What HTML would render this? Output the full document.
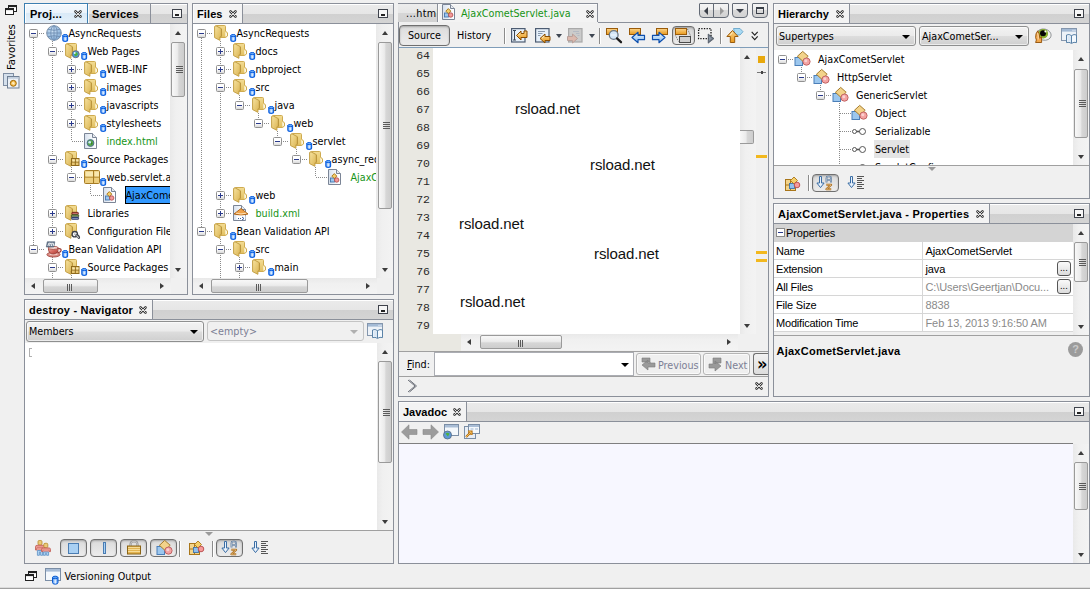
<!DOCTYPE html><html><head><meta charset="utf-8"><title>NetBeans IDE</title><style>

html,body{margin:0;padding:0}
body{width:1090px;height:589px;overflow:hidden;background:#f0f0f0;position:relative;font-family:'DejaVu Sans Condensed','DejaVu Sans','Liberation Sans',sans-serif;font-stretch:condensed;font-size:11px;color:#000}
div{position:absolute;white-space:nowrap}
svg{display:block;position:absolute;left:0;top:0;overflow:visible}
.tt{font-family:'Liberation Sans',sans-serif;font-weight:bold;font-size:11px;color:#000}
.tl{font-size:10.7px}
.tl.sel{background:#3399ff;color:#000;padding:0 1px;box-sizing:border-box;outline:1px solid #000;outline-offset:-1px}
.vd{width:1px;background-image:linear-gradient(#8a8a8a 50%,transparent 50%);background-size:1px 2px}
.hd{height:1px;background-image:linear-gradient(90deg,#8a8a8a 50%,transparent 50%);background-size:2px 1px}
.arr{width:0;height:0}
.ps{font-family:'Liberation Sans',sans-serif;font-size:11px;letter-spacing:-.1px}

</style></head><body>
<svg width="0" height="0" style="position:absolute">
<defs>
<linearGradient id="gFold" x1="0" y1="0" x2="1" y2="1"><stop offset="0" stop-color="#f7e3a0"/><stop offset="1" stop-color="#d9b24f"/></linearGradient>
<linearGradient id="gFoldB" x1="0" y1="0" x2="0" y2="1"><stop offset="0" stop-color="#f3dc93"/><stop offset="1" stop-color="#e2c061"/></linearGradient>
<linearGradient id="gCyl" x1="0" y1="0" x2="1" y2="0"><stop offset="0" stop-color="#3f8af0"/><stop offset=".3" stop-color="#9cc7fb"/><stop offset=".5" stop-color="#f4f9ff"/><stop offset=".7" stop-color="#9cc7fb"/><stop offset="1" stop-color="#3f8af0"/></linearGradient>
<radialGradient id="gGlobe" cx=".4" cy=".35" r=".7"><stop offset="0" stop-color="#cfe3f5"/><stop offset="1" stop-color="#7fa9d4"/></radialGradient>
<linearGradient id="gBtn" x1="0" y1="0" x2="0" y2="1"><stop offset="0" stop-color="#f4f4f4"/><stop offset=".5" stop-color="#e6e6e6"/><stop offset=".5" stop-color="#d9d9d9"/><stop offset="1" stop-color="#cfcfcf"/></linearGradient>
<linearGradient id="gOr" x1="0" y1="0" x2="0" y2="1"><stop offset="0" stop-color="#fbd48a"/><stop offset="1" stop-color="#e8991c"/></linearGradient>
<linearGradient id="gBl" x1="0" y1="0" x2="0" y2="1"><stop offset="0" stop-color="#f2f9ff"/><stop offset="1" stop-color="#7fb8ee"/></linearGradient>
<linearGradient id="gCup" x1="0" y1="0" x2="1" y2="1"><stop offset="0" stop-color="#f0b3ab"/><stop offset=".5" stop-color="#d5675d"/><stop offset="1" stop-color="#a93b32"/></linearGradient><linearGradient id="gPage" x1="0" y1="0" x2="1" y2="0"><stop offset="0" stop-color="#d6e0ed"/><stop offset=".6" stop-color="#f4f7fb"/><stop offset="1" stop-color="#ffffff"/></linearGradient>
</defs></svg>
<div style="left:5px;top:5px;width:12px;height:10px;"><svg width="12" height="10" viewBox="0 0 12 10" ><rect x="3.5" y=".5" width="8" height="6" fill="#fff" stroke="#222"/><rect x="3.5" y=".5" width="8" height="1.6" fill="#222"/><rect x=".5" y="3.5" width="8" height="6" fill="#fff" stroke="#222"/><rect x=".5" y="3.5" width="8" height="1.6" fill="#222"/></svg></div>
<div style="left:5px;top:70px;width:60px;height:14px;transform-origin:0 0;transform:rotate(-90deg);font-size:11.3px;line-height:14px">Favorites</div>
<div style="left:3px;top:73px;width:17px;height:16px;"><svg width="17" height="16" viewBox="0 0 17 16" ><rect x=".5" y=".5" width="10" height="12" fill="#d5e0ec" stroke="#7f8ea3"/><rect x="4.5" y="3.5" width="11.5" height="11.5" fill="#eef2f7" stroke="#6f7f94"/><rect x="5" y="4" width="10.5" height="1.8" fill="#c3cfde"/><circle cx="10.3" cy="10.3" r="3" fill="#f0ae2c" stroke="#9a6408" stroke-width=".9"/><path d="M8.3 10.3 h4 M10.3 8.3 v4 M8.9 8.9 l2.8 2.8 M11.7 8.9 l-2.8 2.8" stroke="#fff3d6" stroke-width=".7"/></svg></div>
<div style="left:24px;top:3px;width:164px;height:292px;box-sizing:border-box;border:1px solid #8b909a;background:#f0f0f0"><div style="left:0px;top:0px;width:162px;height:20px;"><div style="left:0;top:0;width:162px;height:19px;background:linear-gradient(#fff 0,#fff 1px,#eaeaea 1px,#e6e6e6 50%,#d0d0d0 53%,#d4d4d4)"></div><div style="left:0;top:19px;width:162px;height:1px;background:#8b909a"></div><div style="left:0px;top:0;width:62px;height:19px;background:#f3f3f3;box-shadow:inset 1px 1px 0 #fbfbfb"></div><div style="left:62px;top:0;width:1px;height:19px;background:#8b909a"></div><div class="tt" style="left:4px;top:0;height:20px;line-height:21px;letter-spacing:0.2px">Proj...</div><div style="left:49px;top:6px;width:8px;height:8px"><svg width="8" height="8" viewBox="0 0 8 8" ><path d="M1.5 1.5 L6.5 6.5 M6.5 1.5 L1.5 6.5" stroke="#3c3c3c" stroke-width="2.6" stroke-linecap="round"/><path d="M1.5 1.5 L6.5 6.5 M6.5 1.5 L1.5 6.5" stroke="#f4f4f4" stroke-width=".9" stroke-linecap="round"/></svg></div><div style="left:63px;top:0;width:62px;height:19px;background:linear-gradient(#fff 0,#fff 1px,#eaeaea 1px,#e6e6e6 50%,#d0d0d0 53%,#d4d4d4);box-shadow:inset 1px 1px 0 #fbfbfb"></div><div style="left:125px;top:0;width:1px;height:19px;background:#8b909a"></div><div class="tt" style="left:67px;top:0;height:20px;line-height:21px;letter-spacing:0.2px">Services</div><div style="left:147px;top:5px;width:10px;height:9px;box-sizing:border-box;border:1px solid #3f434c;background:#f6f6f6"><div style="left:2px;top:4px;width:4px;height:2px;background:#222"></div></div></div><div style="left:-1px;top:-1px;width:64px;height:21px;box-sizing:border-box;border:1px solid #3c7fb1;border-bottom-color:#8b909a;background:linear-gradient(#f4f9fd,#eaf3fb 50%,#d9eaf7 50%,#e4f0fa);box-shadow:inset 1px 1px 0 #fff"><div class="tt" style="left:5px;top:0;height:20px;line-height:21px;letter-spacing:.2px">Proj...</div><div style="left:49px;top:6px;width:8px;height:8px"><svg width="8" height="8" viewBox="0 0 8 8" ><path d="M1.5 1.5 L6.5 6.5 M6.5 1.5 L1.5 6.5" stroke="#3c3c3c" stroke-width="2.6" stroke-linecap="round"/><path d="M1.5 1.5 L6.5 6.5 M6.5 1.5 L1.5 6.5" stroke="#f4f4f4" stroke-width=".9" stroke-linecap="round"/></svg></div></div><div style="left:0px;top:20px;width:145px;height:254px;overflow:hidden;background:#fff"><div class="vd" style="left:27px;top:17px;height:190px"></div><div class="vd" style="left:46px;top:35px;height:82px"></div><div class="vd" style="left:46px;top:143px;height:10px"></div><div class="vd" style="left:65px;top:161px;height:10px"></div><div class="vd" style="left:27px;top:233px;height:29px"></div><div class="vd" style="left:46px;top:251px;height:12px"></div><div class="vd" style="left:8px;top:14px;height:207px"></div><div class="hd" style="left:14px;top:9px;width:6px"></div><div style="left:4px;top:5px;width:9px;height:9px;box-sizing:border-box;border:1px solid #919191;border-radius:1.5px;background:linear-gradient(#fff 45%,#d9d9d9)"><div style="left:2px;top:3px;width:3px;height:1px;background:#2a3a8c;width:5px;left:1px"></div></div><div style="left:21px;top:1px;width:16px;height:16px"><svg width="16" height="16" viewBox="0 0 16 16" ><circle cx="8" cy="8" r="7.3" fill="url(#gGlobe)" stroke="#7f93aa" stroke-width="1"/><ellipse cx="8" cy="8" rx="3.2" ry="7.3" fill="none" stroke="#6f8fb3" stroke-width=".9"/><path d="M.8 8 H15.2 M8 .8 V15.2 M2 4.3 Q8 6.3 14 4.3 M2 11.7 Q8 9.7 14 11.7" fill="none" stroke="#6f8fb3" stroke-width=".9"/></svg></div><div style="left:37px;top:9px;width:8px;height:9px"><svg width="8" height="9" viewBox="0 0 8 9" ><path d="M.8 2.7 V7.1 Q.8 8.4 3.2 8.4 Q5.6 8.4 5.6 7.1 V2.7Z" fill="url(#gCyl)" stroke="#0b5fe0" stroke-width="1.1"/><ellipse cx="3.2" cy="2.6" rx="2.4" ry="1.1" fill="#6fadf7" stroke="#0b5fe0" stroke-width="1"/></svg></div><div class="tl" style="left:43.5px;top:0px;height:18px;line-height:19px;color:#000">AsyncRequests</div><div class="hd" style="left:33px;top:27px;width:6px"></div><div style="left:23px;top:23px;width:9px;height:9px;box-sizing:border-box;border:1px solid #919191;border-radius:1.5px;background:linear-gradient(#fff 45%,#d9d9d9)"><div style="left:2px;top:3px;width:3px;height:1px;background:#2a3a8c;width:5px;left:1px"></div></div><div style="left:40px;top:19px;width:16px;height:16px"><svg width="16" height="16" viewBox="0 0 16 16" ><path d="M1.5 1.5 Q1.5 .5 2.5 .5 L10.5 .5 Q11.5 .5 11.5 1.5 L11.5 12.5 L1.5 12.5 Z" fill="url(#gFoldB)" stroke="#cfab50" stroke-width="1"/><path d="M.6 1.4 L2 .8 L7.4 3.7 V11.4 L5.9 11.9 V15.3 L.6 12.6 Z" fill="url(#gFold)" stroke="#c4a046" stroke-width="1" stroke-linejoin="round"/><path d="M7.4 4 V11.3" stroke="#b8923a" stroke-width=".9"/><circle cx="10.7" cy="11.2" r="3.5" fill="#4a9be0" stroke="#6b7079" stroke-width="1"/><path d="M8.8 10.2 Q10.2 8.6 12.3 9.6 L12.9 11.6 L10.8 13.6 L9.6 12.2 Z" fill="#4fb23a"/><circle cx="9.7" cy="9.9" r="1" fill="#e3f2ff"/></svg></div><div style="left:56px;top:27px;width:8px;height:9px"><svg width="8" height="9" viewBox="0 0 8 9" ><path d="M.8 2.7 V7.1 Q.8 8.4 3.2 8.4 Q5.6 8.4 5.6 7.1 V2.7Z" fill="url(#gCyl)" stroke="#0b5fe0" stroke-width="1.1"/><ellipse cx="3.2" cy="2.6" rx="2.4" ry="1.1" fill="#6fadf7" stroke="#0b5fe0" stroke-width="1"/></svg></div><div class="tl" style="left:62.5px;top:18px;height:18px;line-height:19px;color:#000">Web Pages</div><div class="hd" style="left:52px;top:45px;width:6px"></div><div style="left:42px;top:41px;width:9px;height:9px;box-sizing:border-box;border:1px solid #919191;border-radius:1.5px;background:linear-gradient(#fff 45%,#d9d9d9)"><div style="left:2px;top:3px;width:3px;height:1px;background:#2a3a8c;width:5px;left:1px"></div><div style="left:3px;top:1px;width:1px;height:5px;background:#2a3a8c"></div></div><div style="left:59px;top:37px;width:16px;height:16px"><svg width="16" height="16" viewBox="0 0 16 16" ><path d="M1.5 1.5 Q1.5 .5 2.5 .5 L10.5 .5 Q11.5 .5 11.5 1.5 L11.5 6 L13.5 8 L13.5 11 L11.5 12.5 L6 12.5 L1.5 12.5 Z" fill="url(#gFoldB)" stroke="#cfab50" stroke-width="1"/><path d="M11.4 6.8 L12.9 8.3 L12.9 10.8 L11.4 11.8 Z" fill="#fffdf0"/><path d="M.6 1.4 L2 .8 L7.4 3.7 V11.4 L5.9 11.9 V15.3 L.6 12.6 Z" fill="url(#gFold)" stroke="#c4a046" stroke-width="1" stroke-linejoin="round"/><path d="M7.4 4 V11.3" stroke="#b8923a" stroke-width=".9"/></svg></div><div style="left:75px;top:45px;width:8px;height:9px"><svg width="8" height="9" viewBox="0 0 8 9" ><path d="M.8 2.7 V7.1 Q.8 8.4 3.2 8.4 Q5.6 8.4 5.6 7.1 V2.7Z" fill="url(#gCyl)" stroke="#0b5fe0" stroke-width="1.1"/><ellipse cx="3.2" cy="2.6" rx="2.4" ry="1.1" fill="#6fadf7" stroke="#0b5fe0" stroke-width="1"/></svg></div><div class="tl" style="left:81.5px;top:36px;height:18px;line-height:19px;color:#000">WEB-INF</div><div class="hd" style="left:52px;top:63px;width:6px"></div><div style="left:42px;top:59px;width:9px;height:9px;box-sizing:border-box;border:1px solid #919191;border-radius:1.5px;background:linear-gradient(#fff 45%,#d9d9d9)"><div style="left:2px;top:3px;width:3px;height:1px;background:#2a3a8c;width:5px;left:1px"></div><div style="left:3px;top:1px;width:1px;height:5px;background:#2a3a8c"></div></div><div style="left:59px;top:55px;width:16px;height:16px"><svg width="16" height="16" viewBox="0 0 16 16" ><path d="M1.5 1.5 Q1.5 .5 2.5 .5 L10.5 .5 Q11.5 .5 11.5 1.5 L11.5 6 L13.5 8 L13.5 11 L11.5 12.5 L6 12.5 L1.5 12.5 Z" fill="url(#gFoldB)" stroke="#cfab50" stroke-width="1"/><path d="M11.4 6.8 L12.9 8.3 L12.9 10.8 L11.4 11.8 Z" fill="#fffdf0"/><path d="M.6 1.4 L2 .8 L7.4 3.7 V11.4 L5.9 11.9 V15.3 L.6 12.6 Z" fill="url(#gFold)" stroke="#c4a046" stroke-width="1" stroke-linejoin="round"/><path d="M7.4 4 V11.3" stroke="#b8923a" stroke-width=".9"/></svg></div><div style="left:75px;top:63px;width:8px;height:9px"><svg width="8" height="9" viewBox="0 0 8 9" ><path d="M.8 2.7 V7.1 Q.8 8.4 3.2 8.4 Q5.6 8.4 5.6 7.1 V2.7Z" fill="url(#gCyl)" stroke="#0b5fe0" stroke-width="1.1"/><ellipse cx="3.2" cy="2.6" rx="2.4" ry="1.1" fill="#6fadf7" stroke="#0b5fe0" stroke-width="1"/></svg></div><div class="tl" style="left:81.5px;top:54px;height:18px;line-height:19px;color:#000">images</div><div class="hd" style="left:52px;top:81px;width:6px"></div><div style="left:42px;top:77px;width:9px;height:9px;box-sizing:border-box;border:1px solid #919191;border-radius:1.5px;background:linear-gradient(#fff 45%,#d9d9d9)"><div style="left:2px;top:3px;width:3px;height:1px;background:#2a3a8c;width:5px;left:1px"></div><div style="left:3px;top:1px;width:1px;height:5px;background:#2a3a8c"></div></div><div style="left:59px;top:73px;width:16px;height:16px"><svg width="16" height="16" viewBox="0 0 16 16" ><path d="M1.5 1.5 Q1.5 .5 2.5 .5 L10.5 .5 Q11.5 .5 11.5 1.5 L11.5 6 L13.5 8 L13.5 11 L11.5 12.5 L6 12.5 L1.5 12.5 Z" fill="url(#gFoldB)" stroke="#cfab50" stroke-width="1"/><path d="M11.4 6.8 L12.9 8.3 L12.9 10.8 L11.4 11.8 Z" fill="#fffdf0"/><path d="M.6 1.4 L2 .8 L7.4 3.7 V11.4 L5.9 11.9 V15.3 L.6 12.6 Z" fill="url(#gFold)" stroke="#c4a046" stroke-width="1" stroke-linejoin="round"/><path d="M7.4 4 V11.3" stroke="#b8923a" stroke-width=".9"/></svg></div><div style="left:75px;top:81px;width:8px;height:9px"><svg width="8" height="9" viewBox="0 0 8 9" ><path d="M.8 2.7 V7.1 Q.8 8.4 3.2 8.4 Q5.6 8.4 5.6 7.1 V2.7Z" fill="url(#gCyl)" stroke="#0b5fe0" stroke-width="1.1"/><ellipse cx="3.2" cy="2.6" rx="2.4" ry="1.1" fill="#6fadf7" stroke="#0b5fe0" stroke-width="1"/></svg></div><div class="tl" style="left:81.5px;top:72px;height:18px;line-height:19px;color:#000">javascripts</div><div class="hd" style="left:52px;top:99px;width:6px"></div><div style="left:42px;top:95px;width:9px;height:9px;box-sizing:border-box;border:1px solid #919191;border-radius:1.5px;background:linear-gradient(#fff 45%,#d9d9d9)"><div style="left:2px;top:3px;width:3px;height:1px;background:#2a3a8c;width:5px;left:1px"></div><div style="left:3px;top:1px;width:1px;height:5px;background:#2a3a8c"></div></div><div style="left:59px;top:91px;width:16px;height:16px"><svg width="16" height="16" viewBox="0 0 16 16" ><path d="M1.5 1.5 Q1.5 .5 2.5 .5 L10.5 .5 Q11.5 .5 11.5 1.5 L11.5 6 L13.5 8 L13.5 11 L11.5 12.5 L6 12.5 L1.5 12.5 Z" fill="url(#gFoldB)" stroke="#cfab50" stroke-width="1"/><path d="M11.4 6.8 L12.9 8.3 L12.9 10.8 L11.4 11.8 Z" fill="#fffdf0"/><path d="M.6 1.4 L2 .8 L7.4 3.7 V11.4 L5.9 11.9 V15.3 L.6 12.6 Z" fill="url(#gFold)" stroke="#c4a046" stroke-width="1" stroke-linejoin="round"/><path d="M7.4 4 V11.3" stroke="#b8923a" stroke-width=".9"/></svg></div><div style="left:75px;top:99px;width:8px;height:9px"><svg width="8" height="9" viewBox="0 0 8 9" ><path d="M.8 2.7 V7.1 Q.8 8.4 3.2 8.4 Q5.6 8.4 5.6 7.1 V2.7Z" fill="url(#gCyl)" stroke="#0b5fe0" stroke-width="1.1"/><ellipse cx="3.2" cy="2.6" rx="2.4" ry="1.1" fill="#6fadf7" stroke="#0b5fe0" stroke-width="1"/></svg></div><div class="tl" style="left:81.5px;top:90px;height:18px;line-height:19px;color:#000">stylesheets</div><div class="hd" style="left:47px;top:117px;width:11px"></div><div style="left:59px;top:109px;width:16px;height:16px"><svg width="16" height="16" viewBox="0 0 16 16" ><path d="M.5 .5 H8.5 L12.5 4.5 V15.5 H.5Z" fill="url(#gPage)" stroke="#7b8596"/><path d="M8.5 .5 V4.5 H12.5" fill="#e6eaf0" stroke="#7b8596"/><circle cx="6.5" cy="10" r="3.4" fill="#5aa84a" stroke="#4d6f8f" stroke-width="1"/><circle cx="5.7" cy="9.2" r="1.3" fill="#cfe8ff"/><path d="M7.3 9 l1.2 1.4 l-1.5 1.6" fill="#2f7d2a"/></svg></div><div class="tl" style="left:81.5px;top:108px;height:18px;line-height:19px;color:#169416">index.html</div><div class="hd" style="left:33px;top:135px;width:6px"></div><div style="left:23px;top:131px;width:9px;height:9px;box-sizing:border-box;border:1px solid #919191;border-radius:1.5px;background:linear-gradient(#fff 45%,#d9d9d9)"><div style="left:2px;top:3px;width:3px;height:1px;background:#2a3a8c;width:5px;left:1px"></div></div><div style="left:40px;top:127px;width:16px;height:16px"><svg width="16" height="16" viewBox="0 0 16 16" ><path d="M1.5 1.5 Q1.5 .5 2.5 .5 L10.5 .5 Q11.5 .5 11.5 1.5 L11.5 12.5 L1.5 12.5 Z" fill="url(#gFoldB)" stroke="#cfab50" stroke-width="1"/><path d="M.6 1.4 L2 .8 L7.4 3.7 V11.4 L5.9 11.9 V15.3 L.6 12.6 Z" fill="url(#gFold)" stroke="#c4a046" stroke-width="1" stroke-linejoin="round"/><path d="M7.4 4 V11.3" stroke="#b8923a" stroke-width=".9"/><rect x="6.5" y="7.5" width="7.5" height="7" fill="#e7c673" stroke="#8f6a1c"/><path d="M6.5 11 H14 M10.3 7.5 V14.5" stroke="#8f6a1c" stroke-width="1"/><path d="M7.5 8.5 h2.3 v2 h-2.3z M11.3 8.5 h2.2 v2 h-2.2z" fill="#f8e6ad"/></svg></div><div style="left:56px;top:135px;width:8px;height:9px"><svg width="8" height="9" viewBox="0 0 8 9" ><path d="M.8 2.7 V7.1 Q.8 8.4 3.2 8.4 Q5.6 8.4 5.6 7.1 V2.7Z" fill="url(#gCyl)" stroke="#0b5fe0" stroke-width="1.1"/><ellipse cx="3.2" cy="2.6" rx="2.4" ry="1.1" fill="#6fadf7" stroke="#0b5fe0" stroke-width="1"/></svg></div><div class="tl" style="left:62.5px;top:126px;height:18px;line-height:19px;color:#000">Source Packages</div><div class="hd" style="left:52px;top:153px;width:6px"></div><div style="left:42px;top:149px;width:9px;height:9px;box-sizing:border-box;border:1px solid #919191;border-radius:1.5px;background:linear-gradient(#fff 45%,#d9d9d9)"><div style="left:2px;top:3px;width:3px;height:1px;background:#2a3a8c;width:5px;left:1px"></div></div><div style="left:59px;top:145px;width:16px;height:16px"><svg width="16" height="16" viewBox="0 0 16 16" ><rect x=".5" y="1.5" width="15" height="13" rx="1" fill="#e8c56c" stroke="#a67c25"/><path d="M.5 8 H15.5 M9.5 1.5 V14.5" stroke="#a67c25"/><path d="M1.5 2.5 h7.5 v5 h-7.5z M10.5 2.5 h4.5 v5 h-4.5z" fill="#f8e7ae"/><path d="M1.5 9 h7.5 v5 h-7.5z M10.5 9 h4.5 v5 h-4.5z" fill="#edcf7f"/></svg></div><div style="left:75px;top:153px;width:8px;height:9px"><svg width="8" height="9" viewBox="0 0 8 9" ><path d="M.8 2.7 V7.1 Q.8 8.4 3.2 8.4 Q5.6 8.4 5.6 7.1 V2.7Z" fill="url(#gCyl)" stroke="#0b5fe0" stroke-width="1.1"/><ellipse cx="3.2" cy="2.6" rx="2.4" ry="1.1" fill="#6fadf7" stroke="#0b5fe0" stroke-width="1"/></svg></div><div class="tl" style="left:81.5px;top:144px;height:18px;line-height:19px;color:#000">web.servlet.async_request</div><div class="hd" style="left:66px;top:171px;width:11px"></div><div style="left:78px;top:163px;width:16px;height:16px"><svg width="16" height="16" viewBox="0 0 16 16" ><path d="M.5 .5 H8.5 L12.5 4.5 V15.5 H.5Z" fill="url(#gPage)" stroke="#7b8596"/><path d="M8.5 .5 V4.5 H12.5" fill="#e6eaf0" stroke="#7b8596"/><rect x="2.5" y="9" width="4" height="4" fill="#9cc7ee" stroke="#4677ad" stroke-width=".9"/><path d="M6.3 4.6 L8.8 7.1 L6.3 9.6 L3.8 7.1Z" fill="#f5cf6a" stroke="#a36f14" stroke-width=".9"/><circle cx="8.7" cy="11" r="2.2" fill="#f29a9a" stroke="#b85050" stroke-width=".9"/></svg></div><div class="tl sel" style="left:99.5px;top:162px;height:18px;line-height:19px">AjaxCometServlet.java</div><div class="hd" style="left:33px;top:189px;width:6px"></div><div style="left:23px;top:185px;width:9px;height:9px;box-sizing:border-box;border:1px solid #919191;border-radius:1.5px;background:linear-gradient(#fff 45%,#d9d9d9)"><div style="left:2px;top:3px;width:3px;height:1px;background:#2a3a8c;width:5px;left:1px"></div><div style="left:3px;top:1px;width:1px;height:5px;background:#2a3a8c"></div></div><div style="left:40px;top:181px;width:16px;height:16px"><svg width="16" height="16" viewBox="0 0 16 16" ><path d="M1.5 1.5 Q1.5 .5 2.5 .5 L10.5 .5 Q11.5 .5 11.5 1.5 L11.5 12.5 L1.5 12.5 Z" fill="url(#gFoldB)" stroke="#cfab50" stroke-width="1"/><path d="M.6 1.4 L2 .8 L7.4 3.7 V11.4 L5.9 11.9 V15.3 L.6 12.6 Z" fill="url(#gFold)" stroke="#c4a046" stroke-width="1" stroke-linejoin="round"/><path d="M7.4 4 V11.3" stroke="#b8923a" stroke-width=".9"/><rect x="6.8" y="7.3" width="6.6" height="2.3" rx=".8" fill="#a8342c" stroke="#5e1a14" stroke-width=".7"/><path d="M7.5 8.9 h5.2" stroke="#f0d9d6" stroke-width=".6"/><rect x="6.3" y="9.7" width="7.4" height="2.3" rx=".8" fill="#5e7f3a" stroke="#2f451c" stroke-width=".7"/><path d="M7 11.3 h6" stroke="#e1ead6" stroke-width=".6"/><rect x="6.6" y="12.1" width="7" height="2.4" rx=".8" fill="#3b4f8a" stroke="#1c2750" stroke-width=".7"/><path d="M7.3 13.8 h5.6" stroke="#d9def0" stroke-width=".6"/></svg></div><div class="tl" style="left:62.5px;top:180px;height:18px;line-height:19px;color:#000">Libraries</div><div class="hd" style="left:33px;top:207px;width:6px"></div><div style="left:23px;top:203px;width:9px;height:9px;box-sizing:border-box;border:1px solid #919191;border-radius:1.5px;background:linear-gradient(#fff 45%,#d9d9d9)"><div style="left:2px;top:3px;width:3px;height:1px;background:#2a3a8c;width:5px;left:1px"></div><div style="left:3px;top:1px;width:1px;height:5px;background:#2a3a8c"></div></div><div style="left:40px;top:199px;width:16px;height:16px"><svg width="16" height="16" viewBox="0 0 16 16" ><path d="M1.5 1.5 Q1.5 .5 2.5 .5 L10.5 .5 Q11.5 .5 11.5 1.5 L11.5 12.5 L1.5 12.5 Z" fill="url(#gFoldB)" stroke="#cfab50" stroke-width="1"/><path d="M.6 1.4 L2 .8 L7.4 3.7 V11.4 L5.9 11.9 V15.3 L.6 12.6 Z" fill="url(#gFold)" stroke="#c4a046" stroke-width="1" stroke-linejoin="round"/><path d="M7.4 4 V11.3" stroke="#b8923a" stroke-width=".9"/><circle cx="9.8" cy="11.2" r="2.7" fill="#fafafa" stroke="#3c4048" stroke-width="1.3"/><circle cx="9.8" cy="11.2" r=".9" fill="#b9bec8"/><path d="M11.6 12.6 Q13.6 12.8 13.8 14.6" stroke="#3c4048" stroke-width="2.6" fill="none" stroke-linecap="round"/><path d="M11.8 12.8 Q13.2 13 13.5 14.3" stroke="#f4f4f4" stroke-width="1" fill="none" stroke-linecap="round"/></svg></div><div class="tl" style="left:62.5px;top:198px;height:18px;line-height:19px;color:#000">Configuration Files</div><div class="hd" style="left:14px;top:225px;width:6px"></div><div style="left:4px;top:221px;width:9px;height:9px;box-sizing:border-box;border:1px solid #919191;border-radius:1.5px;background:linear-gradient(#fff 45%,#d9d9d9)"><div style="left:2px;top:3px;width:3px;height:1px;background:#2a3a8c;width:5px;left:1px"></div></div><div style="left:21px;top:217px;width:16px;height:16px"><svg width="17" height="17" viewBox="0 0 17 17" ><ellipse cx="7.5" cy="13.6" rx="6.6" ry="2.4" fill="#d98a82" stroke="#9a3a32" stroke-width=".8"/><ellipse cx="7.5" cy="13.1" rx="4.2" ry="1.2" fill="#f3cfc9"/><path d="M2.4 6.8 H12.2 Q12.4 13 7.3 13 Q2.2 13 2.4 6.8Z" fill="url(#gCup)" stroke="#9a3a32" stroke-width=".9"/><path d="M12.2 7.6 Q15.6 7.2 15 9.8 Q14.4 11.8 11.6 11.4" fill="none" stroke="#9a3a32" stroke-width="1.3"/><path d="M12.3 8.4 Q14.4 8.2 14 9.7 Q13.6 10.8 12 10.6" fill="none" stroke="#e7a29a" stroke-width=".6"/><ellipse cx="7.3" cy="6.9" rx="4.9" ry="1.5" fill="#f6ddd8" stroke="#9a3a32" stroke-width=".8"/><path d="M1.3 .8 H8.8 L7.8 6 H.3Z" fill="#6b7c93" stroke="#46556a" stroke-width=".6"/><path d="M1.9 5 L2.9 2 Q4 1.6 4 2.8 L3.6 5 M4 2.6 Q5.4 1.4 5.9 2.8 L5.4 5 M5.9 2.6 Q7.2 1.4 7.6 2.8 L7.2 5" stroke="#fff" stroke-width=".85" fill="none"/></svg></div><div style="left:37px;top:225px;width:8px;height:9px"><svg width="8" height="9" viewBox="0 0 8 9" ><path d="M.8 2.7 V7.1 Q.8 8.4 3.2 8.4 Q5.6 8.4 5.6 7.1 V2.7Z" fill="url(#gCyl)" stroke="#0b5fe0" stroke-width="1.1"/><ellipse cx="3.2" cy="2.6" rx="2.4" ry="1.1" fill="#6fadf7" stroke="#0b5fe0" stroke-width="1"/></svg></div><div class="tl" style="left:43.5px;top:216px;height:18px;line-height:19px;color:#000">Bean Validation API</div><div class="hd" style="left:33px;top:243px;width:6px"></div><div style="left:23px;top:239px;width:9px;height:9px;box-sizing:border-box;border:1px solid #919191;border-radius:1.5px;background:linear-gradient(#fff 45%,#d9d9d9)"><div style="left:2px;top:3px;width:3px;height:1px;background:#2a3a8c;width:5px;left:1px"></div></div><div style="left:40px;top:235px;width:16px;height:16px"><svg width="16" height="16" viewBox="0 0 16 16" ><path d="M1.5 1.5 Q1.5 .5 2.5 .5 L10.5 .5 Q11.5 .5 11.5 1.5 L11.5 12.5 L1.5 12.5 Z" fill="url(#gFoldB)" stroke="#cfab50" stroke-width="1"/><path d="M.6 1.4 L2 .8 L7.4 3.7 V11.4 L5.9 11.9 V15.3 L.6 12.6 Z" fill="url(#gFold)" stroke="#c4a046" stroke-width="1" stroke-linejoin="round"/><path d="M7.4 4 V11.3" stroke="#b8923a" stroke-width=".9"/><rect x="6.5" y="7.5" width="7.5" height="7" fill="#e7c673" stroke="#8f6a1c"/><path d="M6.5 11 H14 M10.3 7.5 V14.5" stroke="#8f6a1c" stroke-width="1"/><path d="M7.5 8.5 h2.3 v2 h-2.3z M11.3 8.5 h2.2 v2 h-2.2z" fill="#f8e6ad"/></svg></div><div style="left:56px;top:243px;width:8px;height:9px"><svg width="8" height="9" viewBox="0 0 8 9" ><path d="M.8 2.7 V7.1 Q.8 8.4 3.2 8.4 Q5.6 8.4 5.6 7.1 V2.7Z" fill="url(#gCyl)" stroke="#0b5fe0" stroke-width="1.1"/><ellipse cx="3.2" cy="2.6" rx="2.4" ry="1.1" fill="#6fadf7" stroke="#0b5fe0" stroke-width="1"/></svg></div><div class="tl" style="left:62.5px;top:234px;height:18px;line-height:19px;color:#000">Source Packages</div></div><div style="left:145px;top:20px;width:17px;height:254px;background:linear-gradient(90deg,#e9e9e9,#f0f0f0 35%,#f3f3f3)"><div class="arr" style="left:4.5px;top:7px;border-left:3.5px solid transparent;border-right:3.5px solid transparent;border-bottom:4px solid #3c3c3c"></div><div class="arr" style="left:4.5px;top:244px;border-left:3.5px solid transparent;border-right:3.5px solid transparent;border-top:4px solid #3c3c3c"></div><div style="left:1px;top:18px;width:14px;height:55px;box-sizing:border-box;border:1px solid #9a9a9a;border-radius:2px;background:linear-gradient(90deg,#f8f8f8,#ebebeb 45%,#d6d6d6 58%,#cdcdcd)"><div style="left:4px;top:23px;width:7px;height:1px;background:#5a5a5a"></div><div style="left:4px;top:25px;width:7px;height:1px;background:#5a5a5a"></div><div style="left:4px;top:27px;width:7px;height:1px;background:#5a5a5a"></div><div style="left:4px;top:29px;width:7px;height:1px;background:#5a5a5a"></div></div></div><div style="left:0px;top:274px;width:146px;height:16px;background:linear-gradient(#e9e9e9,#f0f0f0 35%,#f3f3f3)"><div class="arr" style="left:6px;top:4.5px;border-top:3.5px solid transparent;border-bottom:3.5px solid transparent;border-right:4px solid #3c3c3c"></div><div class="arr" style="left:135px;top:4.5px;border-top:3.5px solid transparent;border-bottom:3.5px solid transparent;border-left:4px solid #3c3c3c"></div><div style="left:18px;top:1px;width:55px;height:14px;box-sizing:border-box;border:1px solid #9a9a9a;border-radius:2px;background:linear-gradient(#f8f8f8,#ebebeb 45%,#d6d6d6 58%,#cdcdcd)"><div style="top:4px;left:23px;height:7px;width:1px;background:#5a5a5a"></div><div style="top:4px;left:25px;height:7px;width:1px;background:#5a5a5a"></div><div style="top:4px;left:27px;height:7px;width:1px;background:#5a5a5a"></div></div></div><div style="left:146px;top:274px;width:16px;height:16px;background:#f0f0f0"></div></div>
<div style="left:192px;top:3px;width:202px;height:292px;box-sizing:border-box;border:1px solid #8b909a;background:#f0f0f0"><div style="left:0px;top:0px;width:200px;height:20px;"><div style="left:0;top:0;width:200px;height:19px;background:linear-gradient(#fff 0,#fff 1px,#eaeaea 1px,#e6e6e6 50%,#d0d0d0 53%,#d4d4d4)"></div><div style="left:0;top:19px;width:200px;height:1px;background:#8b909a"></div><div style="left:0px;top:0;width:49px;height:19px;background:#f3f3f3;box-shadow:inset 1px 1px 0 #fbfbfb"></div><div style="left:49px;top:0;width:1px;height:19px;background:#8b909a"></div><div class="tt" style="left:4px;top:0;height:20px;line-height:21px;letter-spacing:0.1px">Files</div><div style="left:36px;top:6px;width:8px;height:8px"><svg width="8" height="8" viewBox="0 0 8 8" ><path d="M1.5 1.5 L6.5 6.5 M6.5 1.5 L1.5 6.5" stroke="#3c3c3c" stroke-width="2.6" stroke-linecap="round"/><path d="M1.5 1.5 L6.5 6.5 M6.5 1.5 L1.5 6.5" stroke="#f4f4f4" stroke-width=".9" stroke-linecap="round"/></svg></div><div style="left:185px;top:5px;width:10px;height:9px;box-sizing:border-box;border:1px solid #3f434c;background:#f6f6f6"><div style="left:2px;top:4px;width:4px;height:2px;background:#222"></div></div></div><div style="left:0px;top:20px;width:183px;height:254px;overflow:hidden;background:#fff"><div class="vd" style="left:27px;top:17px;height:172px"></div><div class="vd" style="left:46px;top:71px;height:10px"></div><div class="vd" style="left:65px;top:89px;height:10px"></div><div class="vd" style="left:84px;top:107px;height:10px"></div><div class="vd" style="left:103px;top:125px;height:10px"></div><div class="vd" style="left:122px;top:143px;height:10px"></div><div class="vd" style="left:27px;top:215px;height:47px"></div><div class="vd" style="left:46px;top:233px;height:29px"></div><div class="vd" style="left:8px;top:14px;height:189px"></div><div class="hd" style="left:14px;top:9px;width:6px"></div><div style="left:4px;top:5px;width:9px;height:9px;box-sizing:border-box;border:1px solid #919191;border-radius:1.5px;background:linear-gradient(#fff 45%,#d9d9d9)"><div style="left:2px;top:3px;width:3px;height:1px;background:#2a3a8c;width:5px;left:1px"></div></div><div style="left:21px;top:1px;width:16px;height:16px"><svg width="16" height="16" viewBox="0 0 16 16" ><path d="M1.5 1.5 Q1.5 .5 2.5 .5 L10.5 .5 Q11.5 .5 11.5 1.5 L11.5 6 L13.5 8 L13.5 11 L11.5 12.5 L6 12.5 L1.5 12.5 Z" fill="url(#gFoldB)" stroke="#cfab50" stroke-width="1"/><path d="M11.4 6.8 L12.9 8.3 L12.9 10.8 L11.4 11.8 Z" fill="#fffdf0"/><path d="M.6 1.4 L2 .8 L7.4 3.7 V11.4 L5.9 11.9 V15.3 L.6 12.6 Z" fill="url(#gFold)" stroke="#c4a046" stroke-width="1" stroke-linejoin="round"/><path d="M7.4 4 V11.3" stroke="#b8923a" stroke-width=".9"/></svg></div><div style="left:37px;top:9px;width:8px;height:9px"><svg width="8" height="9" viewBox="0 0 8 9" ><path d="M.8 2.7 V7.1 Q.8 8.4 3.2 8.4 Q5.6 8.4 5.6 7.1 V2.7Z" fill="url(#gCyl)" stroke="#0b5fe0" stroke-width="1.1"/><ellipse cx="3.2" cy="2.6" rx="2.4" ry="1.1" fill="#6fadf7" stroke="#0b5fe0" stroke-width="1"/></svg></div><div class="tl" style="left:43.5px;top:0px;height:18px;line-height:19px;color:#000">AsyncRequests</div><div class="hd" style="left:33px;top:27px;width:6px"></div><div style="left:23px;top:23px;width:9px;height:9px;box-sizing:border-box;border:1px solid #919191;border-radius:1.5px;background:linear-gradient(#fff 45%,#d9d9d9)"><div style="left:2px;top:3px;width:3px;height:1px;background:#2a3a8c;width:5px;left:1px"></div><div style="left:3px;top:1px;width:1px;height:5px;background:#2a3a8c"></div></div><div style="left:40px;top:19px;width:16px;height:16px"><svg width="16" height="16" viewBox="0 0 16 16" ><path d="M1.5 1.5 Q1.5 .5 2.5 .5 L10.5 .5 Q11.5 .5 11.5 1.5 L11.5 6 L13.5 8 L13.5 11 L11.5 12.5 L6 12.5 L1.5 12.5 Z" fill="url(#gFoldB)" stroke="#cfab50" stroke-width="1"/><path d="M11.4 6.8 L12.9 8.3 L12.9 10.8 L11.4 11.8 Z" fill="#fffdf0"/><path d="M.6 1.4 L2 .8 L7.4 3.7 V11.4 L5.9 11.9 V15.3 L.6 12.6 Z" fill="url(#gFold)" stroke="#c4a046" stroke-width="1" stroke-linejoin="round"/><path d="M7.4 4 V11.3" stroke="#b8923a" stroke-width=".9"/></svg></div><div style="left:56px;top:27px;width:8px;height:9px"><svg width="8" height="9" viewBox="0 0 8 9" ><path d="M.8 2.7 V7.1 Q.8 8.4 3.2 8.4 Q5.6 8.4 5.6 7.1 V2.7Z" fill="url(#gCyl)" stroke="#0b5fe0" stroke-width="1.1"/><ellipse cx="3.2" cy="2.6" rx="2.4" ry="1.1" fill="#6fadf7" stroke="#0b5fe0" stroke-width="1"/></svg></div><div class="tl" style="left:62.5px;top:18px;height:18px;line-height:19px;color:#000">docs</div><div class="hd" style="left:33px;top:45px;width:6px"></div><div style="left:23px;top:41px;width:9px;height:9px;box-sizing:border-box;border:1px solid #919191;border-radius:1.5px;background:linear-gradient(#fff 45%,#d9d9d9)"><div style="left:2px;top:3px;width:3px;height:1px;background:#2a3a8c;width:5px;left:1px"></div><div style="left:3px;top:1px;width:1px;height:5px;background:#2a3a8c"></div></div><div style="left:40px;top:37px;width:16px;height:16px"><svg width="16" height="16" viewBox="0 0 16 16" ><path d="M1.5 1.5 Q1.5 .5 2.5 .5 L10.5 .5 Q11.5 .5 11.5 1.5 L11.5 6 L13.5 8 L13.5 11 L11.5 12.5 L6 12.5 L1.5 12.5 Z" fill="url(#gFoldB)" stroke="#cfab50" stroke-width="1"/><path d="M11.4 6.8 L12.9 8.3 L12.9 10.8 L11.4 11.8 Z" fill="#fffdf0"/><path d="M.6 1.4 L2 .8 L7.4 3.7 V11.4 L5.9 11.9 V15.3 L.6 12.6 Z" fill="url(#gFold)" stroke="#c4a046" stroke-width="1" stroke-linejoin="round"/><path d="M7.4 4 V11.3" stroke="#b8923a" stroke-width=".9"/></svg></div><div style="left:56px;top:45px;width:8px;height:9px"><svg width="8" height="9" viewBox="0 0 8 9" ><path d="M.8 2.7 V7.1 Q.8 8.4 3.2 8.4 Q5.6 8.4 5.6 7.1 V2.7Z" fill="url(#gCyl)" stroke="#0b5fe0" stroke-width="1.1"/><ellipse cx="3.2" cy="2.6" rx="2.4" ry="1.1" fill="#6fadf7" stroke="#0b5fe0" stroke-width="1"/></svg></div><div class="tl" style="left:62.5px;top:36px;height:18px;line-height:19px;color:#000">nbproject</div><div class="hd" style="left:33px;top:63px;width:6px"></div><div style="left:23px;top:59px;width:9px;height:9px;box-sizing:border-box;border:1px solid #919191;border-radius:1.5px;background:linear-gradient(#fff 45%,#d9d9d9)"><div style="left:2px;top:3px;width:3px;height:1px;background:#2a3a8c;width:5px;left:1px"></div></div><div style="left:40px;top:55px;width:16px;height:16px"><svg width="16" height="16" viewBox="0 0 16 16" ><path d="M1.5 1.5 Q1.5 .5 2.5 .5 L10.5 .5 Q11.5 .5 11.5 1.5 L11.5 6 L13.5 8 L13.5 11 L11.5 12.5 L6 12.5 L1.5 12.5 Z" fill="url(#gFoldB)" stroke="#cfab50" stroke-width="1"/><path d="M11.4 6.8 L12.9 8.3 L12.9 10.8 L11.4 11.8 Z" fill="#fffdf0"/><path d="M.6 1.4 L2 .8 L7.4 3.7 V11.4 L5.9 11.9 V15.3 L.6 12.6 Z" fill="url(#gFold)" stroke="#c4a046" stroke-width="1" stroke-linejoin="round"/><path d="M7.4 4 V11.3" stroke="#b8923a" stroke-width=".9"/></svg></div><div style="left:56px;top:63px;width:8px;height:9px"><svg width="8" height="9" viewBox="0 0 8 9" ><path d="M.8 2.7 V7.1 Q.8 8.4 3.2 8.4 Q5.6 8.4 5.6 7.1 V2.7Z" fill="url(#gCyl)" stroke="#0b5fe0" stroke-width="1.1"/><ellipse cx="3.2" cy="2.6" rx="2.4" ry="1.1" fill="#6fadf7" stroke="#0b5fe0" stroke-width="1"/></svg></div><div class="tl" style="left:62.5px;top:54px;height:18px;line-height:19px;color:#000">src</div><div class="hd" style="left:52px;top:81px;width:6px"></div><div style="left:42px;top:77px;width:9px;height:9px;box-sizing:border-box;border:1px solid #919191;border-radius:1.5px;background:linear-gradient(#fff 45%,#d9d9d9)"><div style="left:2px;top:3px;width:3px;height:1px;background:#2a3a8c;width:5px;left:1px"></div></div><div style="left:59px;top:73px;width:16px;height:16px"><svg width="16" height="16" viewBox="0 0 16 16" ><path d="M1.5 1.5 Q1.5 .5 2.5 .5 L10.5 .5 Q11.5 .5 11.5 1.5 L11.5 6 L13.5 8 L13.5 11 L11.5 12.5 L6 12.5 L1.5 12.5 Z" fill="url(#gFoldB)" stroke="#cfab50" stroke-width="1"/><path d="M11.4 6.8 L12.9 8.3 L12.9 10.8 L11.4 11.8 Z" fill="#fffdf0"/><path d="M.6 1.4 L2 .8 L7.4 3.7 V11.4 L5.9 11.9 V15.3 L.6 12.6 Z" fill="url(#gFold)" stroke="#c4a046" stroke-width="1" stroke-linejoin="round"/><path d="M7.4 4 V11.3" stroke="#b8923a" stroke-width=".9"/></svg></div><div style="left:75px;top:81px;width:8px;height:9px"><svg width="8" height="9" viewBox="0 0 8 9" ><path d="M.8 2.7 V7.1 Q.8 8.4 3.2 8.4 Q5.6 8.4 5.6 7.1 V2.7Z" fill="url(#gCyl)" stroke="#0b5fe0" stroke-width="1.1"/><ellipse cx="3.2" cy="2.6" rx="2.4" ry="1.1" fill="#6fadf7" stroke="#0b5fe0" stroke-width="1"/></svg></div><div class="tl" style="left:81.5px;top:72px;height:18px;line-height:19px;color:#000">java</div><div class="hd" style="left:71px;top:99px;width:6px"></div><div style="left:61px;top:95px;width:9px;height:9px;box-sizing:border-box;border:1px solid #919191;border-radius:1.5px;background:linear-gradient(#fff 45%,#d9d9d9)"><div style="left:2px;top:3px;width:3px;height:1px;background:#2a3a8c;width:5px;left:1px"></div></div><div style="left:78px;top:91px;width:16px;height:16px"><svg width="16" height="16" viewBox="0 0 16 16" ><path d="M1.5 1.5 Q1.5 .5 2.5 .5 L10.5 .5 Q11.5 .5 11.5 1.5 L11.5 6 L13.5 8 L13.5 11 L11.5 12.5 L6 12.5 L1.5 12.5 Z" fill="url(#gFoldB)" stroke="#cfab50" stroke-width="1"/><path d="M11.4 6.8 L12.9 8.3 L12.9 10.8 L11.4 11.8 Z" fill="#fffdf0"/><path d="M.6 1.4 L2 .8 L7.4 3.7 V11.4 L5.9 11.9 V15.3 L.6 12.6 Z" fill="url(#gFold)" stroke="#c4a046" stroke-width="1" stroke-linejoin="round"/><path d="M7.4 4 V11.3" stroke="#b8923a" stroke-width=".9"/></svg></div><div style="left:94px;top:99px;width:8px;height:9px"><svg width="8" height="9" viewBox="0 0 8 9" ><path d="M.8 2.7 V7.1 Q.8 8.4 3.2 8.4 Q5.6 8.4 5.6 7.1 V2.7Z" fill="url(#gCyl)" stroke="#0b5fe0" stroke-width="1.1"/><ellipse cx="3.2" cy="2.6" rx="2.4" ry="1.1" fill="#6fadf7" stroke="#0b5fe0" stroke-width="1"/></svg></div><div class="tl" style="left:100.5px;top:90px;height:18px;line-height:19px;color:#000">web</div><div class="hd" style="left:90px;top:117px;width:6px"></div><div style="left:80px;top:113px;width:9px;height:9px;box-sizing:border-box;border:1px solid #919191;border-radius:1.5px;background:linear-gradient(#fff 45%,#d9d9d9)"><div style="left:2px;top:3px;width:3px;height:1px;background:#2a3a8c;width:5px;left:1px"></div></div><div style="left:97px;top:109px;width:16px;height:16px"><svg width="16" height="16" viewBox="0 0 16 16" ><path d="M1.5 1.5 Q1.5 .5 2.5 .5 L10.5 .5 Q11.5 .5 11.5 1.5 L11.5 6 L13.5 8 L13.5 11 L11.5 12.5 L6 12.5 L1.5 12.5 Z" fill="url(#gFoldB)" stroke="#cfab50" stroke-width="1"/><path d="M11.4 6.8 L12.9 8.3 L12.9 10.8 L11.4 11.8 Z" fill="#fffdf0"/><path d="M.6 1.4 L2 .8 L7.4 3.7 V11.4 L5.9 11.9 V15.3 L.6 12.6 Z" fill="url(#gFold)" stroke="#c4a046" stroke-width="1" stroke-linejoin="round"/><path d="M7.4 4 V11.3" stroke="#b8923a" stroke-width=".9"/></svg></div><div style="left:113px;top:117px;width:8px;height:9px"><svg width="8" height="9" viewBox="0 0 8 9" ><path d="M.8 2.7 V7.1 Q.8 8.4 3.2 8.4 Q5.6 8.4 5.6 7.1 V2.7Z" fill="url(#gCyl)" stroke="#0b5fe0" stroke-width="1.1"/><ellipse cx="3.2" cy="2.6" rx="2.4" ry="1.1" fill="#6fadf7" stroke="#0b5fe0" stroke-width="1"/></svg></div><div class="tl" style="left:119.5px;top:108px;height:18px;line-height:19px;color:#000">servlet</div><div class="hd" style="left:109px;top:135px;width:6px"></div><div style="left:99px;top:131px;width:9px;height:9px;box-sizing:border-box;border:1px solid #919191;border-radius:1.5px;background:linear-gradient(#fff 45%,#d9d9d9)"><div style="left:2px;top:3px;width:3px;height:1px;background:#2a3a8c;width:5px;left:1px"></div></div><div style="left:116px;top:127px;width:16px;height:16px"><svg width="16" height="16" viewBox="0 0 16 16" ><path d="M1.5 1.5 Q1.5 .5 2.5 .5 L10.5 .5 Q11.5 .5 11.5 1.5 L11.5 6 L13.5 8 L13.5 11 L11.5 12.5 L6 12.5 L1.5 12.5 Z" fill="url(#gFoldB)" stroke="#cfab50" stroke-width="1"/><path d="M11.4 6.8 L12.9 8.3 L12.9 10.8 L11.4 11.8 Z" fill="#fffdf0"/><path d="M.6 1.4 L2 .8 L7.4 3.7 V11.4 L5.9 11.9 V15.3 L.6 12.6 Z" fill="url(#gFold)" stroke="#c4a046" stroke-width="1" stroke-linejoin="round"/><path d="M7.4 4 V11.3" stroke="#b8923a" stroke-width=".9"/></svg></div><div style="left:132px;top:135px;width:8px;height:9px"><svg width="8" height="9" viewBox="0 0 8 9" ><path d="M.8 2.7 V7.1 Q.8 8.4 3.2 8.4 Q5.6 8.4 5.6 7.1 V2.7Z" fill="url(#gCyl)" stroke="#0b5fe0" stroke-width="1.1"/><ellipse cx="3.2" cy="2.6" rx="2.4" ry="1.1" fill="#6fadf7" stroke="#0b5fe0" stroke-width="1"/></svg></div><div class="tl" style="left:138.5px;top:126px;height:18px;line-height:19px;color:#000">async_request</div><div class="hd" style="left:123px;top:153px;width:11px"></div><div style="left:135px;top:145px;width:16px;height:16px"><svg width="16" height="16" viewBox="0 0 16 16" ><path d="M.5 .5 H8.5 L12.5 4.5 V15.5 H.5Z" fill="url(#gPage)" stroke="#7b8596"/><path d="M8.5 .5 V4.5 H12.5" fill="#e6eaf0" stroke="#7b8596"/><rect x="2.5" y="9" width="4" height="4" fill="#9cc7ee" stroke="#4677ad" stroke-width=".9"/><path d="M6.3 4.6 L8.8 7.1 L6.3 9.6 L3.8 7.1Z" fill="#f5cf6a" stroke="#a36f14" stroke-width=".9"/><circle cx="8.7" cy="11" r="2.2" fill="#f29a9a" stroke="#b85050" stroke-width=".9"/></svg></div><div class="tl" style="left:157.5px;top:144px;height:18px;line-height:19px;color:#169416">AjaxCometServlet.java</div><div class="hd" style="left:33px;top:171px;width:6px"></div><div style="left:23px;top:167px;width:9px;height:9px;box-sizing:border-box;border:1px solid #919191;border-radius:1.5px;background:linear-gradient(#fff 45%,#d9d9d9)"><div style="left:2px;top:3px;width:3px;height:1px;background:#2a3a8c;width:5px;left:1px"></div><div style="left:3px;top:1px;width:1px;height:5px;background:#2a3a8c"></div></div><div style="left:40px;top:163px;width:16px;height:16px"><svg width="16" height="16" viewBox="0 0 16 16" ><path d="M1.5 1.5 Q1.5 .5 2.5 .5 L10.5 .5 Q11.5 .5 11.5 1.5 L11.5 6 L13.5 8 L13.5 11 L11.5 12.5 L6 12.5 L1.5 12.5 Z" fill="url(#gFoldB)" stroke="#cfab50" stroke-width="1"/><path d="M11.4 6.8 L12.9 8.3 L12.9 10.8 L11.4 11.8 Z" fill="#fffdf0"/><path d="M.6 1.4 L2 .8 L7.4 3.7 V11.4 L5.9 11.9 V15.3 L.6 12.6 Z" fill="url(#gFold)" stroke="#c4a046" stroke-width="1" stroke-linejoin="round"/><path d="M7.4 4 V11.3" stroke="#b8923a" stroke-width=".9"/></svg></div><div style="left:56px;top:171px;width:8px;height:9px"><svg width="8" height="9" viewBox="0 0 8 9" ><path d="M.8 2.7 V7.1 Q.8 8.4 3.2 8.4 Q5.6 8.4 5.6 7.1 V2.7Z" fill="url(#gCyl)" stroke="#0b5fe0" stroke-width="1.1"/><ellipse cx="3.2" cy="2.6" rx="2.4" ry="1.1" fill="#6fadf7" stroke="#0b5fe0" stroke-width="1"/></svg></div><div class="tl" style="left:62.5px;top:162px;height:18px;line-height:19px;color:#000">web</div><div class="hd" style="left:33px;top:189px;width:6px"></div><div style="left:23px;top:185px;width:9px;height:9px;box-sizing:border-box;border:1px solid #919191;border-radius:1.5px;background:linear-gradient(#fff 45%,#d9d9d9)"><div style="left:2px;top:3px;width:3px;height:1px;background:#2a3a8c;width:5px;left:1px"></div><div style="left:3px;top:1px;width:1px;height:5px;background:#2a3a8c"></div></div><div style="left:40px;top:181px;width:16px;height:16px"><svg width="16" height="16" viewBox="0 0 16 16" ><path d="M.5 .5 H8.5 L12.5 4.5 V15.5 H.5Z" fill="url(#gPage)" stroke="#7b8596"/><path d="M8.5 .5 V4.5 H12.5" fill="#e6eaf0" stroke="#7b8596"/><path d="M1 9 L8 3.5 L15 9 Q8 11.5 1 9Z" fill="#f0a24a" stroke="#a85e12" stroke-width=".9"/><path d="M3 8.2 Q8 9.6 13 8.2" stroke="#fde0b5" stroke-width="1" fill="none"/><rect x="3.5" y="10.5" width="9" height="4" fill="#fff" stroke="none"/><path d="M5 13.5 h1 M7 13.5 h1 M9 12 l2 1.5 l-2 1.5" stroke="#3b5f9c" stroke-width="1" fill="none"/></svg></div><div class="tl" style="left:62.5px;top:180px;height:18px;line-height:19px;color:#169416">build.xml</div><div class="hd" style="left:14px;top:207px;width:6px"></div><div style="left:4px;top:203px;width:9px;height:9px;box-sizing:border-box;border:1px solid #919191;border-radius:1.5px;background:linear-gradient(#fff 45%,#d9d9d9)"><div style="left:2px;top:3px;width:3px;height:1px;background:#2a3a8c;width:5px;left:1px"></div></div><div style="left:21px;top:199px;width:16px;height:16px"><svg width="16" height="16" viewBox="0 0 16 16" ><path d="M1.5 1.5 Q1.5 .5 2.5 .5 L10.5 .5 Q11.5 .5 11.5 1.5 L11.5 6 L13.5 8 L13.5 11 L11.5 12.5 L6 12.5 L1.5 12.5 Z" fill="url(#gFoldB)" stroke="#cfab50" stroke-width="1"/><path d="M11.4 6.8 L12.9 8.3 L12.9 10.8 L11.4 11.8 Z" fill="#fffdf0"/><path d="M.6 1.4 L2 .8 L7.4 3.7 V11.4 L5.9 11.9 V15.3 L.6 12.6 Z" fill="url(#gFold)" stroke="#c4a046" stroke-width="1" stroke-linejoin="round"/><path d="M7.4 4 V11.3" stroke="#b8923a" stroke-width=".9"/></svg></div><div style="left:37px;top:207px;width:8px;height:9px"><svg width="8" height="9" viewBox="0 0 8 9" ><path d="M.8 2.7 V7.1 Q.8 8.4 3.2 8.4 Q5.6 8.4 5.6 7.1 V2.7Z" fill="url(#gCyl)" stroke="#0b5fe0" stroke-width="1.1"/><ellipse cx="3.2" cy="2.6" rx="2.4" ry="1.1" fill="#6fadf7" stroke="#0b5fe0" stroke-width="1"/></svg></div><div class="tl" style="left:43.5px;top:198px;height:18px;line-height:19px;color:#000">Bean Validation API</div><div class="hd" style="left:33px;top:225px;width:6px"></div><div style="left:23px;top:221px;width:9px;height:9px;box-sizing:border-box;border:1px solid #919191;border-radius:1.5px;background:linear-gradient(#fff 45%,#d9d9d9)"><div style="left:2px;top:3px;width:3px;height:1px;background:#2a3a8c;width:5px;left:1px"></div></div><div style="left:40px;top:217px;width:16px;height:16px"><svg width="16" height="16" viewBox="0 0 16 16" ><path d="M1.5 1.5 Q1.5 .5 2.5 .5 L10.5 .5 Q11.5 .5 11.5 1.5 L11.5 6 L13.5 8 L13.5 11 L11.5 12.5 L6 12.5 L1.5 12.5 Z" fill="url(#gFoldB)" stroke="#cfab50" stroke-width="1"/><path d="M11.4 6.8 L12.9 8.3 L12.9 10.8 L11.4 11.8 Z" fill="#fffdf0"/><path d="M.6 1.4 L2 .8 L7.4 3.7 V11.4 L5.9 11.9 V15.3 L.6 12.6 Z" fill="url(#gFold)" stroke="#c4a046" stroke-width="1" stroke-linejoin="round"/><path d="M7.4 4 V11.3" stroke="#b8923a" stroke-width=".9"/></svg></div><div style="left:56px;top:225px;width:8px;height:9px"><svg width="8" height="9" viewBox="0 0 8 9" ><path d="M.8 2.7 V7.1 Q.8 8.4 3.2 8.4 Q5.6 8.4 5.6 7.1 V2.7Z" fill="url(#gCyl)" stroke="#0b5fe0" stroke-width="1.1"/><ellipse cx="3.2" cy="2.6" rx="2.4" ry="1.1" fill="#6fadf7" stroke="#0b5fe0" stroke-width="1"/></svg></div><div class="tl" style="left:62.5px;top:216px;height:18px;line-height:19px;color:#000">src</div><div class="hd" style="left:52px;top:243px;width:6px"></div><div style="left:42px;top:239px;width:9px;height:9px;box-sizing:border-box;border:1px solid #919191;border-radius:1.5px;background:linear-gradient(#fff 45%,#d9d9d9)"><div style="left:2px;top:3px;width:3px;height:1px;background:#2a3a8c;width:5px;left:1px"></div><div style="left:3px;top:1px;width:1px;height:5px;background:#2a3a8c"></div></div><div style="left:59px;top:235px;width:16px;height:16px"><svg width="16" height="16" viewBox="0 0 16 16" ><path d="M1.5 1.5 Q1.5 .5 2.5 .5 L10.5 .5 Q11.5 .5 11.5 1.5 L11.5 6 L13.5 8 L13.5 11 L11.5 12.5 L6 12.5 L1.5 12.5 Z" fill="url(#gFoldB)" stroke="#cfab50" stroke-width="1"/><path d="M11.4 6.8 L12.9 8.3 L12.9 10.8 L11.4 11.8 Z" fill="#fffdf0"/><path d="M.6 1.4 L2 .8 L7.4 3.7 V11.4 L5.9 11.9 V15.3 L.6 12.6 Z" fill="url(#gFold)" stroke="#c4a046" stroke-width="1" stroke-linejoin="round"/><path d="M7.4 4 V11.3" stroke="#b8923a" stroke-width=".9"/></svg></div><div style="left:75px;top:243px;width:8px;height:9px"><svg width="8" height="9" viewBox="0 0 8 9" ><path d="M.8 2.7 V7.1 Q.8 8.4 3.2 8.4 Q5.6 8.4 5.6 7.1 V2.7Z" fill="url(#gCyl)" stroke="#0b5fe0" stroke-width="1.1"/><ellipse cx="3.2" cy="2.6" rx="2.4" ry="1.1" fill="#6fadf7" stroke="#0b5fe0" stroke-width="1"/></svg></div><div class="tl" style="left:81.5px;top:234px;height:18px;line-height:19px;color:#000">main</div></div><div style="left:183px;top:20px;width:17px;height:254px;background:linear-gradient(90deg,#e9e9e9,#f0f0f0 35%,#f3f3f3)"><div class="arr" style="left:5.5px;top:7px;border-left:3.5px solid transparent;border-right:3.5px solid transparent;border-bottom:4px solid #3c3c3c"></div><div class="arr" style="left:5.5px;top:244px;border-left:3.5px solid transparent;border-right:3.5px solid transparent;border-top:4px solid #3c3c3c"></div><div style="left:2px;top:18px;width:14px;height:167px;box-sizing:border-box;border:1px solid #9a9a9a;border-radius:2px;background:linear-gradient(90deg,#f8f8f8,#ebebeb 45%,#d6d6d6 58%,#cdcdcd)"><div style="left:4px;top:79px;width:7px;height:1px;background:#5a5a5a"></div><div style="left:4px;top:81px;width:7px;height:1px;background:#5a5a5a"></div><div style="left:4px;top:83px;width:7px;height:1px;background:#5a5a5a"></div><div style="left:4px;top:85px;width:7px;height:1px;background:#5a5a5a"></div></div></div><div style="left:0px;top:274px;width:184px;height:16px;background:linear-gradient(#e9e9e9,#f0f0f0 35%,#f3f3f3)"><div class="arr" style="left:6px;top:4.5px;border-top:3.5px solid transparent;border-bottom:3.5px solid transparent;border-right:4px solid #3c3c3c"></div><div class="arr" style="left:173px;top:4.5px;border-top:3.5px solid transparent;border-bottom:3.5px solid transparent;border-left:4px solid #3c3c3c"></div><div style="left:18px;top:1px;width:97px;height:14px;box-sizing:border-box;border:1px solid #9a9a9a;border-radius:2px;background:linear-gradient(#f8f8f8,#ebebeb 45%,#d6d6d6 58%,#cdcdcd)"><div style="top:4px;left:44px;height:7px;width:1px;background:#5a5a5a"></div><div style="top:4px;left:46px;height:7px;width:1px;background:#5a5a5a"></div><div style="top:4px;left:48px;height:7px;width:1px;background:#5a5a5a"></div></div></div><div style="left:184px;top:274px;width:16px;height:16px;background:#f0f0f0"></div></div>
<div style="left:398px;top:3px;width:40px;height:20px;box-sizing:border-box;border-top:1px solid #8b909a;border-right:1px solid #8b909a;border-bottom:1px solid #8b909a;background:linear-gradient(#ededed,#e6e6e6 48%,#d6d6d6 52%,#d2d2d2);overflow:hidden"><div style="left:8px;top:0;height:19px;line-height:19px;font-size:10.7px;letter-spacing:.35px">...html</div></div><div style="left:438px;top:3px;width:160px;height:20px;box-sizing:border-box;border-top:1px solid #8b909a;border-right:1px solid #8b909a;background:#f3f3f3;box-shadow:inset 1px 1px 0 #fbfbfb"><div style="left:4px;top:0px;width:16px;height:16px"><svg width="16" height="16" viewBox="0 0 16 16" ><path d="M.5 .5 H8.5 L12.5 4.5 V15.5 H.5Z" fill="url(#gPage)" stroke="#7b8596"/><path d="M8.5 .5 V4.5 H12.5" fill="#e6eaf0" stroke="#7b8596"/><rect x="2.5" y="9" width="4" height="4" fill="#9cc7ee" stroke="#4677ad" stroke-width=".9"/><path d="M6.3 4.6 L8.8 7.1 L6.3 9.6 L3.8 7.1Z" fill="#f5cf6a" stroke="#a36f14" stroke-width=".9"/><circle cx="8.7" cy="11" r="2.2" fill="#f29a9a" stroke="#b85050" stroke-width=".9"/></svg></div><div style="left:23px;top:0;height:19px;line-height:19px;font-size:10.7px;color:#169416">AjaxCometServlet.java</div><div style="left:148px;top:6px;width:8px;height:8px"><svg width="8" height="8" viewBox="0 0 8 8" ><path d="M1.5 1.5 L6.5 6.5 M6.5 1.5 L1.5 6.5" stroke="#3c3c3c" stroke-width="2.6" stroke-linecap="round"/><path d="M1.5 1.5 L6.5 6.5 M6.5 1.5 L1.5 6.5" stroke="#f4f4f4" stroke-width=".9" stroke-linecap="round"/></svg></div></div><div style="left:699px;top:3px;width:15px;height:15px;box-sizing:border-box;border:1px solid #636a75;border-radius:1px 0 0 4px;background:linear-gradient(#f4f4f4,#ececec 50%,#d9d9d9 50%,#d3d3d3)"><div class="arr" style="left:4px;top:3px;border-top:4px solid transparent;border-bottom:4px solid transparent;border-right:4px solid #3a3f48"></div></div><div style="left:713px;top:3px;width:16px;height:15px;box-sizing:border-box;border:1px solid #636a75;border-radius:0 1px 4px 0;background:linear-gradient(#f4f4f4,#ececec 50%,#d9d9d9 50%,#d3d3d3)"><div class="arr" style="left:6px;top:3px;border-top:4px solid transparent;border-bottom:4px solid transparent;border-left:4px solid #9a9a9a"></div></div><div style="left:732px;top:3px;width:16px;height:15px;box-sizing:border-box;border:1px solid #636a75;border-radius:1px 1px 4px 4px;background:linear-gradient(#f4f4f4,#ececec 50%,#d9d9d9 50%,#d3d3d3)"><div class="arr" style="left:3px;top:5px;border-left:4px solid transparent;border-right:4px solid transparent;border-top:4px solid #3a3f48"></div></div><div style="left:752px;top:3px;width:16px;height:15px;box-sizing:border-box;border:1px solid #636a75;border-radius:1px 1px 4px 4px;background:linear-gradient(#f4f4f4,#ececec 50%,#d9d9d9 50%,#d3d3d3)"><div style="left:3px;top:3px;width:8px;height:7px;box-sizing:border-box;border:1px solid #3a3f48;border-top-width:2px"></div></div><div style="left:398px;top:22px;width:371px;height:375px;box-sizing:border-box;border:1px solid #8b909a;border-top:none;background:#f0f0f0"></div><div style="left:598px;top:22px;width:171px;height:1px;background:#8b909a"></div><div style="left:399px;top:47px;width:369px;height:1px;background:#7f9db9"></div><div style="left:399px;top:25px;width:51px;height:21px;box-sizing:border-box;border:1px solid #6f6f6f;border-radius:4px;background:linear-gradient(#dcdcdc,#ececec);box-shadow:inset 0 1px 2px rgba(0,0,0,.25)"><div style="left:0;top:0;width:49px;height:19px;line-height:19px;text-align:center;font-size:10.7px">Source</div></div><div style="left:457px;top:26px;width:40px;height:19px;line-height:19px;font-size:10.7px">History</div><div style="left:504px;top:28px;width:1px;height:16px;background:#8c8c8c"></div><div style="left:505px;top:28px;width:1px;height:16px;background:#fff"></div><div style="left:511px;top:27px;width:18px;height:18px;"><svg width="18" height="18" viewBox="0 0 18 18" ><rect x=".6" y="1.6" width="13.4" height="13.4" fill="#e6f0fa" stroke="#4d5c72" stroke-width="1.2"/><path d="M3.5 3.5 v9.6 M2 3.5 h3 M2 13 h3" stroke="#3a4657" stroke-width="1" fill="none"/><path d="M5.5 8.5 L10 4 V6.5 H13 V4 H16 V10.5 H10 V13Z" fill="url(#gOr)" stroke="#8a4d00" stroke-width="1" stroke-linejoin="round"/><path d="M7.3 8.2 L9.3 6.2" stroke="#fff0c8" stroke-width="1"/></svg></div><div style="left:535px;top:27px;width:18px;height:18px;"><svg width="18" height="18" viewBox="0 0 18 18" ><rect x=".6" y="1.6" width="13.4" height="13.4" fill="#e6f0fa" stroke="#4d5c72" stroke-width="1.2"/><path d="M3 4.5 h7 M3 6.5 h4.5 M3 8.5 h2.5" stroke="#8a9bb0"/><path d="M5 11.5 L10 7 V9.5 H15 V13.5 H10 V16Z" fill="url(#gOr)" stroke="#8a4d00" stroke-width="1" stroke-linejoin="round"/><path d="M7 11.2 L9 9.4" stroke="#fff0c8" stroke-width="1"/></svg></div><div style="left:556px;top:34px;width:0px;height:0px;border-left:3px solid transparent;border-right:3px solid transparent;border-top:4px solid #3f4652"></div><div style="left:567px;top:27px;width:18px;height:18px;"><svg width="18" height="18" viewBox="0 0 18 18" ><rect x="1.6" y="1.6" width="13.4" height="13.4" fill="#cbcbcb" stroke="#a9a9a9" stroke-width="1.2"/><path d="M6 4.5 h6 M9 6.5 h3.5 M10.5 8.5 h2" stroke="#b4bac4"/><path d="M10.5 11.5 L5.5 7 V9.5 H.5 V13.5 H5.5 V16Z" fill="#dcb9ae" stroke="#b9a09a" stroke-width="1" stroke-linejoin="round"/></svg></div><div style="left:589px;top:34px;width:0px;height:0px;border-left:3px solid transparent;border-right:3px solid transparent;border-top:4px solid #3f4652"></div><div style="left:599px;top:28px;width:1px;height:16px;background:#8c8c8c"></div><div style="left:600px;top:28px;width:1px;height:16px;background:#fff"></div><div style="left:605px;top:27px;width:18px;height:18px;"><svg width="18" height="18" viewBox="0 0 18 18" ><rect x="1.5" y="1.5" width="11" height="6" fill="url(#gOr)" stroke="#9a5b0a" stroke-width="1"/><circle cx="8.7" cy="8" r="4.4" fill="#d3e6f7" stroke="#6b7887" stroke-width="1.3"/><path d="M5.8 8 h5.8" stroke="#f4f9fd" stroke-width="1"/><path d="M12 11.4 L16 15.2" stroke="#1c1c1c" stroke-width="2.3" stroke-linecap="round"/></svg></div><div style="left:628px;top:27px;width:18px;height:18px;"><svg width="18" height="18" viewBox="0 0 18 18" ><rect x="1.5" y="1.5" width="11" height="6" fill="url(#gOr)" stroke="#9a5b0a" stroke-width="1"/><path d="M4 10.5 l6 -5.2 v3 h6.5 v4.4 h-6.5 v3z" fill="url(#gBl)" stroke="#0d4fae" stroke-width="1.2" stroke-linejoin="round"/></svg></div><div style="left:651px;top:27px;width:18px;height:18px;"><svg width="18" height="18" viewBox="0 0 18 18" ><rect x="5.5" y="1.5" width="11" height="6" fill="url(#gOr)" stroke="#9a5b0a" stroke-width="1"/><path d="M14 10.5 l-6 -5.2 v3 h-6.5 v4.4 h6.5 v3z" fill="url(#gBl)" stroke="#0d4fae" stroke-width="1.2" stroke-linejoin="round"/></svg></div><div style="left:672px;top:26px;width:23px;height:19px;box-sizing:border-box;border:1px solid #6f6f6f;border-radius:4px;background:linear-gradient(#d4d4d4,#ececec);box-shadow:inset 0 1px 2px rgba(0,0,0,.25)"><svg width="21" height="17" viewBox="0 0 21 17" ><rect x="2.5" y="1.5" width="11" height="6" fill="url(#gOr)" stroke="#9a5b0a" stroke-width="1"/><rect x="6.5" y="9.5" width="11" height="6" fill="#cfcfcf" stroke="#4a4a4a" stroke-width="1"/><path d="M2.5 8.5 L5.5 14.5 M14.5 2 L17.5 8.5" stroke="#555" stroke-width=".8" stroke-dasharray="1 1"/></svg></div><div style="left:697px;top:27px;width:18px;height:18px;"><svg width="18" height="18" viewBox="0 0 18 18" ><rect x="1.6" y="1.6" width="12.4" height="10" fill="none" stroke="#111" stroke-width="1.3" stroke-dasharray="1.3 1.35"/><path d="M11.2 7 v9.2 l5.8 -4.6z" fill="#66717f" stroke="#3d4550" stroke-width=".6"/><path d="M12 9 v5 l3 -2.5z" fill="#8b96a4"/></svg></div><div style="left:720px;top:28px;width:1px;height:16px;background:#8c8c8c"></div><div style="left:721px;top:28px;width:1px;height:16px;background:#fff"></div><div style="left:726px;top:27px;width:18px;height:18px;"><svg width="18" height="18" viewBox="0 0 18 18" ><path d="M7.5 1.5 H14 L17 4.7 L14 8 H9z" fill="#a9daf3" stroke="#6aa6c9" stroke-width=".9"/><path d="M6.5 3.5 l5.6 6 h-3.4 v6 h-4.4 v-6 h-3.4z" fill="url(#gOr)" stroke="#9a5b0a" stroke-width="1" stroke-linejoin="round"/><path d="M6.5 5.5 l-2.5 3" stroke="#fff0c8" stroke-width="1"/></svg></div><div style="left:751px;top:31px;width:8px;height:10px;"><svg width="8" height="10" viewBox="0 0 8 10" ><path d="M.7 .8 l3 3.4 l3 -3.4 M.7 5.3 l3 3.4 l3 -3.4" stroke="#222" stroke-width="1.1" fill="none"/></svg></div><div style="left:399px;top:48px;width:34px;height:286px;background:#e9e8e2"></div><div style="left:433px;top:48px;width:307px;height:286px;background:#fff"></div><div style="left:399px;top:48px;width:34px;height:286px;overflow:hidden"><div style="left:0;top:-1px;width:31px;height:18px;line-height:18px;text-align:right;font-family:'Liberation Mono',monospace;font-size:11.5px;color:#2a2a2a">64</div><div style="left:0;top:17px;width:31px;height:18px;line-height:18px;text-align:right;font-family:'Liberation Mono',monospace;font-size:11.5px;color:#2a2a2a">65</div><div style="left:0;top:35px;width:31px;height:18px;line-height:18px;text-align:right;font-family:'Liberation Mono',monospace;font-size:11.5px;color:#2a2a2a">66</div><div style="left:0;top:53px;width:31px;height:18px;line-height:18px;text-align:right;font-family:'Liberation Mono',monospace;font-size:11.5px;color:#2a2a2a">67</div><div style="left:0;top:71px;width:31px;height:18px;line-height:18px;text-align:right;font-family:'Liberation Mono',monospace;font-size:11.5px;color:#2a2a2a">68</div><div style="left:0;top:89px;width:31px;height:18px;line-height:18px;text-align:right;font-family:'Liberation Mono',monospace;font-size:11.5px;color:#2a2a2a">69</div><div style="left:0;top:107px;width:31px;height:18px;line-height:18px;text-align:right;font-family:'Liberation Mono',monospace;font-size:11.5px;color:#2a2a2a">70</div><div style="left:0;top:125px;width:31px;height:18px;line-height:18px;text-align:right;font-family:'Liberation Mono',monospace;font-size:11.5px;color:#2a2a2a">71</div><div style="left:0;top:143px;width:31px;height:18px;line-height:18px;text-align:right;font-family:'Liberation Mono',monospace;font-size:11.5px;color:#2a2a2a">72</div><div style="left:0;top:161px;width:31px;height:18px;line-height:18px;text-align:right;font-family:'Liberation Mono',monospace;font-size:11.5px;color:#2a2a2a">73</div><div style="left:0;top:179px;width:31px;height:18px;line-height:18px;text-align:right;font-family:'Liberation Mono',monospace;font-size:11.5px;color:#2a2a2a">74</div><div style="left:0;top:197px;width:31px;height:18px;line-height:18px;text-align:right;font-family:'Liberation Mono',monospace;font-size:11.5px;color:#2a2a2a">75</div><div style="left:0;top:215px;width:31px;height:18px;line-height:18px;text-align:right;font-family:'Liberation Mono',monospace;font-size:11.5px;color:#2a2a2a">76</div><div style="left:0;top:233px;width:31px;height:18px;line-height:18px;text-align:right;font-family:'Liberation Mono',monospace;font-size:11.5px;color:#2a2a2a">77</div><div style="left:0;top:251px;width:31px;height:18px;line-height:18px;text-align:right;font-family:'Liberation Mono',monospace;font-size:11.5px;color:#2a2a2a">78</div><div style="left:0;top:269px;width:31px;height:18px;line-height:18px;text-align:right;font-family:'Liberation Mono',monospace;font-size:11.5px;color:#2a2a2a">79</div></div><div style="left:515px;top:99px;width:70px;height:20px;font-family:'Liberation Sans',sans-serif;font-size:15px;line-height:20px;color:#111;letter-spacing:-.1px">rsload.net</div><div style="left:590px;top:155px;width:70px;height:20px;font-family:'Liberation Sans',sans-serif;font-size:15px;line-height:20px;color:#111;letter-spacing:-.1px">rsload.net</div><div style="left:459px;top:214px;width:70px;height:20px;font-family:'Liberation Sans',sans-serif;font-size:15px;line-height:20px;color:#111;letter-spacing:-.1px">rsload.net</div><div style="left:594px;top:244px;width:70px;height:20px;font-family:'Liberation Sans',sans-serif;font-size:15px;line-height:20px;color:#111;letter-spacing:-.1px">rsload.net</div><div style="left:460px;top:292px;width:70px;height:20px;font-family:'Liberation Sans',sans-serif;font-size:15px;line-height:20px;color:#111;letter-spacing:-.1px">rsload.net</div><div style="left:740px;top:48px;width:16px;height:286px;background:linear-gradient(90deg,#e9e9e9,#f0f0f0 35%,#f3f3f3)"><div class="arr" style="left:3.5px;top:7px;border-left:3.5px solid transparent;border-right:3.5px solid transparent;border-bottom:4px solid #3c3c3c"></div><div class="arr" style="left:3.5px;top:276px;border-left:3.5px solid transparent;border-right:3.5px solid transparent;border-top:4px solid #3c3c3c"></div><div style="left:0px;top:82px;width:14px;height:14px;box-sizing:border-box;border:1px solid #9a9a9a;border-left:none;border-radius:0 2px 2px 0;background:linear-gradient(90deg,#f8f8f8,#ebebeb 45%,#d6d6d6 58%,#cdcdcd)"></div></div><div style="left:756px;top:48px;width:12px;height:303px;background:#f0f0f0"></div><div style="left:758px;top:56px;width:7px;height:7px;background:#e8a80c"></div><div style="left:757px;top:71px;width:9px;height:3px;"><svg width="9" height="3" viewBox="0 0 9 3" ><path d="M0 1.5 h9" stroke="#777" stroke-width="1"/><rect x="4" y="0" width="2" height="3" fill="#444"/></svg></div><div style="left:756px;top:155px;width:11px;height:3px;background:#f2b81e"></div><div style="left:756px;top:251px;width:11px;height:3px;background:#f2b81e"></div><div style="left:756px;top:259px;width:11px;height:3px;background:#f2b81e"></div><div style="left:399px;top:334px;width:62px;height:17px;background:#e9e8e2"></div><div style="left:461px;top:334px;width:277px;height:16px;background:linear-gradient(#e9e9e9,#f0f0f0 35%,#f3f3f3)"><div class="arr" style="left:6px;top:4.5px;border-top:3.5px solid transparent;border-bottom:3.5px solid transparent;border-right:4px solid #3c3c3c"></div><div class="arr" style="left:266px;top:4.5px;border-top:3.5px solid transparent;border-bottom:3.5px solid transparent;border-left:4px solid #3c3c3c"></div><div style="left:19px;top:1px;width:82px;height:14px;box-sizing:border-box;border:1px solid #9a9a9a;border-radius:2px;background:linear-gradient(#f8f8f8,#ebebeb 45%,#d6d6d6 58%,#cdcdcd)"><div style="top:4px;left:37px;height:7px;width:1px;background:#5a5a5a"></div><div style="top:4px;left:39px;height:7px;width:1px;background:#5a5a5a"></div><div style="top:4px;left:41px;height:7px;width:1px;background:#5a5a5a"></div></div></div><div style="left:738px;top:334px;width:30px;height:17px;background:#f0f0f0"></div><div style="left:399px;top:351px;width:369px;height:1px;background:#a0a0a0"></div><div style="left:407px;top:357px;width:30px;height:16px;line-height:16px;font-size:10.7px"><span style="text-decoration:underline">F</span>ind:</div><div style="left:434px;top:352px;width:200px;height:24px;box-sizing:border-box;border:1px solid #abadb3;background:#fff"><div class="arr" style="left:186px;top:10px;border-left:4px solid transparent;border-right:4px solid transparent;border-top:4px solid #000"></div></div><div style="left:636px;top:353px;width:65px;height:22px;box-sizing:border-box;border:1px solid #b5b5b5;border-radius:3px;background:#efefef;box-shadow:inset 0 0 0 1px #fafafa"><svg width="16" height="16" viewBox="0 0 16 16" style="left:3px;top:2px"><path d="M2 2 h8 v5 h5 v4 h-7 v3 l-6 -5 l6 -5 v3 h2 v-1 h-8z" fill="#9a9a9a" stroke="#7a7a7a" stroke-width=".6"/></svg><div style="left:21px;top:0;height:20px;line-height:23px;font-size:10.7px;color:#7c7f95">Previous</div></div><div style="left:703px;top:353px;width:47px;height:22px;box-sizing:border-box;border:1px solid #b5b5b5;border-radius:3px;background:#efefef;box-shadow:inset 0 0 0 1px #fafafa"><svg width="16" height="16" viewBox="0 0 16 16" style="left:3px;top:2px"><path d="M6 2 h8 v5 h-6 v1 v-3 l6 5 l-6 5 v-3 h-6 v-4 h4z" fill="#9a9a9a" stroke="#7a7a7a" stroke-width=".6"/></svg><div style="left:21px;top:0;height:20px;line-height:23px;font-size:10.7px;color:#7c7f95">Next</div></div><div style="left:753px;top:353px;width:15px;height:22px;box-sizing:border-box;border:1px solid #707070;border-right:none;border-radius:3px 0 0 3px;background:linear-gradient(#f2f2f2,#ddd)"><div style="left:3px;top:0;line-height:19px;font-weight:bold;font-size:18px;letter-spacing:-1px">&#187;</div></div><div style="left:399px;top:376px;width:369px;height:1px;background:#a0a0a0"></div><div style="left:407px;top:379px;width:10px;height:14px;"><svg width="10" height="14" viewBox="0 0 10 14" ><path d="M1 1 L8 7 L1 13 M2.5 1 L9.5 7 L2.5 13" stroke="#4a4f5a" stroke-width=".8" fill="none"/></svg></div><div style="left:755px;top:382px;width:8px;height:8px"><svg width="8" height="8" viewBox="0 0 8 8" ><path d="M1.5 1.5 L6.5 6.5 M6.5 1.5 L1.5 6.5" stroke="#3c3c3c" stroke-width="2.6" stroke-linecap="round"/><path d="M1.5 1.5 L6.5 6.5 M6.5 1.5 L1.5 6.5" stroke="#f4f4f4" stroke-width=".9" stroke-linecap="round"/></svg></div>
<div style="left:773px;top:3px;width:317px;height:196px;box-sizing:border-box;border:1px solid #8b909a;background:#f0f0f0"><div style="left:0px;top:0px;width:315px;height:20px;"><div style="left:0;top:0;width:315px;height:19px;background:linear-gradient(#fff 0,#fff 1px,#eaeaea 1px,#e6e6e6 50%,#d0d0d0 53%,#d4d4d4)"></div><div style="left:0;top:19px;width:315px;height:1px;background:#8b909a"></div><div style="left:0px;top:0;width:75px;height:19px;background:#f3f3f3;box-shadow:inset 1px 1px 0 #fbfbfb"></div><div style="left:75px;top:0;width:1px;height:19px;background:#8b909a"></div><div class="tt" style="left:4px;top:0;height:20px;line-height:21px;letter-spacing:0px">Hierarchy</div><div style="left:62px;top:6px;width:8px;height:8px"><svg width="8" height="8" viewBox="0 0 8 8" ><path d="M1.5 1.5 L6.5 6.5 M6.5 1.5 L1.5 6.5" stroke="#3c3c3c" stroke-width="2.6" stroke-linecap="round"/><path d="M1.5 1.5 L6.5 6.5 M6.5 1.5 L1.5 6.5" stroke="#f4f4f4" stroke-width=".9" stroke-linecap="round"/></svg></div><div style="left:300px;top:5px;width:10px;height:9px;box-sizing:border-box;border:1px solid #3f434c;background:#f6f6f6"><div style="left:2px;top:4px;width:4px;height:2px;background:#222"></div></div></div><div style="left:2px;top:22px;width:140px;height:20px;box-sizing:border-box;border:1px solid #8e8f8f;border-radius:3px;background:linear-gradient(#f2f2f2,#ebebeb 48%,#dddddd 52%,#cfcfcf);box-shadow:inset 0 0 0 1px rgba(255,255,255,.6)"><div style="left:2px;top:0;height:18px;line-height:19px;font-size:10.7px;color:#000">Supertypes</div><div class="arr" style="left:125px;top:8px;border-left:4px solid transparent;border-right:4px solid transparent;border-top:4px solid #000"></div></div><div style="left:145px;top:22px;width:110px;height:20px;box-sizing:border-box;border:1px solid #8e8f8f;border-radius:3px;background:linear-gradient(#f2f2f2,#ebebeb 48%,#dddddd 52%,#cfcfcf);box-shadow:inset 0 0 0 1px rgba(255,255,255,.6)"><div style="left:2px;top:0;height:18px;line-height:19px;font-size:10.7px;color:#000">AjaxCometSer...</div><div class="arr" style="left:95px;top:8px;border-left:4px solid transparent;border-right:4px solid transparent;border-top:4px solid #000"></div></div><div style="left:261px;top:24px;width:17px;height:16px;"><svg width="17" height="16" viewBox="0 0 17 16" ><ellipse cx="9" cy="6.6" rx="7.2" ry="5.6" transform="rotate(12 9 6.6)" fill="#f4f6ee" stroke="#8e9196" stroke-width=".9"/><circle cx="8.2" cy="5.7" r="4.8" fill="#6f9d25"/><circle cx="8.2" cy="5.7" r="3.9" fill="none" stroke="#a6c23a" stroke-width=".8"/><circle cx="8" cy="5.2" r="2.9" fill="#050505"/><circle cx="10.4" cy="3.6" r="1" fill="#fff"/><path d="M.6 14.5 H6.6 V8.8 L4.8 10.3 Q4.6 5.5 2.8 2.8 Q.4 5.5 .6 9.5 L1.4 12Z" fill="#f2a84e" stroke="#8f4e06" stroke-width=".9" stroke-linejoin="round"/><path d="M2.6 5 Q3.6 8 3.2 11.5" stroke="#fbd9a5" stroke-width="1.1" fill="none"/></svg></div><div style="left:287px;top:24px;width:16px;height:16px;"><svg width="16" height="16" viewBox="0 0 16 16" ><rect x=".5" y=".5" width="15" height="12" fill="#edf2f8" stroke="#8496ad"/><rect x="1" y="1" width="14" height="2.6" fill="#a3bad5"/><path d="M11.5 2.3 h1 M13.5 2.3 h1" stroke="#fff" stroke-width="1"/><path d="M5.5 7 Q8 5.8 10.5 7.6 Q13 5.8 15.5 7 V14.6 Q13 13.6 10.5 15.4 Q8 13.6 5.5 14.6Z" fill="#f4f9fe" stroke="#5b83a8" stroke-width="1"/><path d="M10.5 7.6 V15.2" stroke="#5b83a8" stroke-width="1"/><path d="M6.5 8 Q8.5 7.3 10 8.6 V14.2 Q8.5 13.2 6.5 13.8Z" fill="#dbe8f5"/></svg></div><div style="left:0px;top:46px;width:299px;height:115px;overflow:hidden;background:#fff"><div class="vd" style="left:27px;top:17px;height:10px"></div><div class="vd" style="left:46px;top:35px;height:10px"></div><div class="vd" style="left:65px;top:53px;height:83px"></div><div class="hd" style="left:14px;top:9px;width:6px"></div><div style="left:4px;top:5px;width:9px;height:9px;box-sizing:border-box;border:1px solid #919191;border-radius:1.5px;background:linear-gradient(#fff 45%,#d9d9d9)"><div style="left:2px;top:3px;width:3px;height:1px;background:#2a3a8c;width:5px;left:1px"></div></div><div style="left:20px;top:1px;width:16px;height:16px"><svg width="16" height="16" viewBox="0 0 16 16" ><rect x="1" y="6.5" width="7.5" height="8" fill="#9cc7ee" stroke="#4b7fb8"/><path d="M8.7 .4 L14.2 5.3 L9 10.4 L3.4 5.3Z" fill="#f3d38a" stroke="#a67c2d"/><circle cx="12.5" cy="10.6" r="3.6" fill="#f4a3a3" stroke="#c26464"/><circle cx="11.8" cy="9.8" r="1.5" fill="#fbd0d0"/></svg></div><div class="tl" style="left:44px;top:0px;height:18px;line-height:19px;color:#000">AjaxCometServlet</div><div class="hd" style="left:33px;top:27px;width:6px"></div><div style="left:23px;top:23px;width:9px;height:9px;box-sizing:border-box;border:1px solid #919191;border-radius:1.5px;background:linear-gradient(#fff 45%,#d9d9d9)"><div style="left:2px;top:3px;width:3px;height:1px;background:#2a3a8c;width:5px;left:1px"></div></div><div style="left:39px;top:19px;width:16px;height:16px"><svg width="16" height="16" viewBox="0 0 16 16" ><rect x="1" y="6.5" width="7.5" height="8" fill="#9cc7ee" stroke="#4b7fb8"/><path d="M8.7 .4 L14.2 5.3 L9 10.4 L3.4 5.3Z" fill="#f3d38a" stroke="#a67c2d"/><circle cx="12.5" cy="10.6" r="3.6" fill="#f4a3a3" stroke="#c26464"/><circle cx="11.8" cy="9.8" r="1.5" fill="#fbd0d0"/></svg></div><div class="tl" style="left:63px;top:18px;height:18px;line-height:19px;color:#000">HttpServlet</div><div class="hd" style="left:52px;top:45px;width:6px"></div><div style="left:42px;top:41px;width:9px;height:9px;box-sizing:border-box;border:1px solid #919191;border-radius:1.5px;background:linear-gradient(#fff 45%,#d9d9d9)"><div style="left:2px;top:3px;width:3px;height:1px;background:#2a3a8c;width:5px;left:1px"></div></div><div style="left:58px;top:37px;width:16px;height:16px"><svg width="16" height="16" viewBox="0 0 16 16" ><rect x="1" y="6.5" width="7.5" height="8" fill="#9cc7ee" stroke="#4b7fb8"/><path d="M8.7 .4 L14.2 5.3 L9 10.4 L3.4 5.3Z" fill="#f3d38a" stroke="#a67c2d"/><circle cx="12.5" cy="10.6" r="3.6" fill="#f4a3a3" stroke="#c26464"/><circle cx="11.8" cy="9.8" r="1.5" fill="#fbd0d0"/></svg></div><div class="tl" style="left:82px;top:36px;height:18px;line-height:19px;color:#000">GenericServlet</div><div class="hd" style="left:66px;top:63px;width:11px"></div><div style="left:77px;top:55px;width:16px;height:16px"><svg width="16" height="16" viewBox="0 0 16 16" ><rect x="1" y="6.5" width="7.5" height="8" fill="#9cc7ee" stroke="#4b7fb8"/><path d="M8.7 .4 L14.2 5.3 L9 10.4 L3.4 5.3Z" fill="#f3d38a" stroke="#a67c2d"/><circle cx="12.5" cy="10.6" r="3.6" fill="#f4a3a3" stroke="#c26464"/><circle cx="11.8" cy="9.8" r="1.5" fill="#fbd0d0"/></svg></div><div class="tl" style="left:101px;top:54px;height:18px;line-height:19px;color:#000">Object</div><div class="hd" style="left:66px;top:81px;width:11px"></div><div style="left:77px;top:73px;width:16px;height:16px"><svg width="16" height="16" viewBox="0 0 16 16" ><circle cx="3.5" cy="8.5" r="2" fill="#fff" stroke="#555"/><circle cx="11.5" cy="8.5" r="3" fill="#fff" stroke="#555"/><path d="M5.5 8.5 H8.5" stroke="#555" stroke-width="1.6"/></svg></div><div class="tl" style="left:101px;top:72px;height:18px;line-height:19px;color:#000">Serializable</div><div class="hd" style="left:66px;top:99px;width:11px"></div><div style="left:77px;top:91px;width:16px;height:16px"><svg width="16" height="16" viewBox="0 0 16 16" ><circle cx="3.5" cy="8.5" r="2" fill="#fff" stroke="#555"/><circle cx="11.5" cy="8.5" r="3" fill="#fff" stroke="#555"/><path d="M5.5 8.5 H8.5" stroke="#555" stroke-width="1.6"/></svg></div><div class="tl" style="left:100px;top:90px;height:18px;line-height:19px;background:#e4e4e4;padding:0 1px">Servlet</div><div class="hd" style="left:66px;top:117px;width:11px"></div><div style="left:77px;top:109px;width:16px;height:16px"><svg width="16" height="16" viewBox="0 0 16 16" ><circle cx="3.5" cy="8.5" r="2" fill="#fff" stroke="#555"/><circle cx="11.5" cy="8.5" r="3" fill="#fff" stroke="#555"/><path d="M5.5 8.5 H8.5" stroke="#555" stroke-width="1.6"/></svg></div><div class="tl" style="left:101px;top:108px;height:18px;line-height:19px;color:#000">ServletConfig</div></div><div style="left:299px;top:46px;width:16px;height:115px;background:linear-gradient(90deg,#e9e9e9,#f0f0f0 35%,#f3f3f3)"><div class="arr" style="left:4.5px;top:7px;border-left:3.5px solid transparent;border-right:3.5px solid transparent;border-bottom:4px solid #3c3c3c"></div><div class="arr" style="left:4.5px;top:105px;border-left:3.5px solid transparent;border-right:3.5px solid transparent;border-top:4px solid #3c3c3c"></div><div style="left:1px;top:19px;width:14px;height:69px;box-sizing:border-box;border:1px solid #9a9a9a;border-radius:2px;background:linear-gradient(90deg,#f8f8f8,#ebebeb 45%,#d6d6d6 58%,#cdcdcd)"><div style="left:4px;top:30px;width:7px;height:1px;background:#5a5a5a"></div><div style="left:4px;top:32px;width:7px;height:1px;background:#5a5a5a"></div><div style="left:4px;top:34px;width:7px;height:1px;background:#5a5a5a"></div><div style="left:4px;top:36px;width:7px;height:1px;background:#5a5a5a"></div></div></div><div style="left:0px;top:161px;width:315px;height:1px;background:#a0a0a0"></div><div style="left:154px;top:163px;width:0px;height:0px;border-left:4px solid transparent;border-right:4px solid transparent;border-top:4px solid #9a9a9a"></div><div style="left:11px;top:172px;width:16px;height:16px;"><svg width="16" height="16" viewBox="0 0 16 16" ><rect x=".5" y="3.5" width="10" height="11" fill="#f3d48a" stroke="#a9761a"/><path d="M.5 9 H10.5 M5.5 3.5 V14.5" stroke="#a9761a"/><rect x="4.5" y="7.5" width="5" height="5" fill="#8fc0ec" stroke="#3f73aa" stroke-width=".9"/><path d="M9 1 L12.5 4.5 L9 8 L5.5 4.5Z" fill="#f5cf6a" stroke="#a9761a" stroke-width=".9"/><circle cx="12" cy="9" r="2.8" fill="#f59a9a" stroke="#b74a4a" stroke-width=".9"/></svg></div><div style="left:34px;top:171px;width:1px;height:16px;background:#8c8c8c"></div><div style="left:35px;top:171px;width:1px;height:16px;background:#fff"></div><div style="left:38px;top:170px;width:27px;height:18px;box-sizing:border-box;border:1px solid #707070;border-radius:4px;background:linear-gradient(#dadada,#ececec);box-shadow:inset 0 1px 2px rgba(0,0,0,.25)"><svg width="19" height="16" viewBox="0 0 19 16" style="left:3px;top:0px"><svg width="19" height="16" viewBox="0 0 19 16" ><path d="M3.5 1.5 h2 v6.5 h2.6 l-3.6 4.6 l-3.6 -4.6 h2.6z" fill="#e8f1fb" stroke="#3b6ea5" stroke-width="1" stroke-linejoin="round"/><path d="M10.5 7.5 V3 Q10.5 1.5 12 1.5 H13.5 Q15 1.5 15 3 V7.5 M10.5 5 H15" fill="none" stroke="#47688e" stroke-width="1.7"/><path d="M10.5 7.5 V3 Q10.5 1.5 12 1.5 H13.5 Q15 1.5 15 3 V7.5 M10.5 5 H15" fill="none" stroke="#e9f0f8" stroke-width=".5"/><path d="M10.3 9.8 H15.2 L10.3 14.2 H15.2" fill="none" stroke="#a8640c" stroke-width="1.9" stroke-linejoin="round"/><path d="M10.3 9.8 H15.2 L10.3 14.2 H15.2" fill="none" stroke="#f8e3b8" stroke-width=".6"/></svg></svg></div><div style="left:73px;top:171px;width:19px;height:16px;"><svg width="19" height="16" viewBox="0 0 19 16" ><path d="M3.5 1.5 h2 v6.5 h2.6 l-3.6 4.6 l-3.6 -4.6 h2.6z" fill="#e8f1fb" stroke="#3b6ea5" stroke-width="1" stroke-linejoin="round"/><path d="M10 1.5 h7 M10 3.5 h5 M10 5.5 h7 M10 7.5 h5 M10 9.5 h7 M10 11.5 h5 M10 13.5 h7" stroke="#555" stroke-width="1"/></svg></div></div>
<div style="left:773px;top:203px;width:317px;height:194px;box-sizing:border-box;border:1px solid #8b909a;background:#f0f0f0"><div style="left:0px;top:0px;width:315px;height:20px;"><div style="left:0;top:0;width:315px;height:19px;background:linear-gradient(#fff 0,#fff 1px,#eaeaea 1px,#e6e6e6 50%,#d0d0d0 53%,#d4d4d4)"></div><div style="left:0;top:19px;width:315px;height:1px;background:#8b909a"></div><div style="left:0px;top:0;width:215px;height:19px;background:#f3f3f3;box-shadow:inset 1px 1px 0 #fbfbfb"></div><div style="left:215px;top:0;width:1px;height:19px;background:#8b909a"></div><div class="tt" style="left:4px;top:0;height:20px;line-height:21px;letter-spacing:0.25px">AjaxCometServlet.java - Properties</div><div style="left:202px;top:6px;width:8px;height:8px"><svg width="8" height="8" viewBox="0 0 8 8" ><path d="M1.5 1.5 L6.5 6.5 M6.5 1.5 L1.5 6.5" stroke="#3c3c3c" stroke-width="2.6" stroke-linecap="round"/><path d="M1.5 1.5 L6.5 6.5 M6.5 1.5 L1.5 6.5" stroke="#f4f4f4" stroke-width=".9" stroke-linecap="round"/></svg></div><div style="left:300px;top:5px;width:10px;height:9px;box-sizing:border-box;border:1px solid #3f434c;background:#f6f6f6"><div style="left:2px;top:4px;width:4px;height:2px;background:#222"></div></div></div><div style="left:0px;top:20px;width:299px;height:111px;overflow:hidden;background:#f0f0f0"><div style="left:0px;top:0px;width:299px;height:18px;background:#d4d4d4"></div><div style="left:2px;top:4px;width:9px;height:9px;box-sizing:border-box;border:1px solid #8a8a8a;background:#fff"><div style="left:1px;top:3px;width:5px;height:1px;background:#2a3a8c"></div></div><div class="ps" style="left:12px;top:0px;width:100px;height:18px;line-height:18px">Properties</div><div style="left:0px;top:18px;width:299px;height:17px;background:#fff"></div><div style="left:0px;top:35px;width:299px;height:1px;background:#d6d6d6"></div><div class="ps" style="left:2px;top:18px;width:140px;height:17px;line-height:18px;letter-spacing:-.2px">Name</div><div class="ps" style="left:151.5px;top:18px;width:140px;height:17px;line-height:18px;color:#000">AjaxCometServlet</div><div style="left:0px;top:36px;width:299px;height:17px;background:#fff"></div><div style="left:0px;top:53px;width:299px;height:1px;background:#d6d6d6"></div><div class="ps" style="left:2px;top:36px;width:140px;height:17px;line-height:18px;letter-spacing:-.2px">Extension</div><div class="ps" style="left:151.5px;top:36px;width:140px;height:17px;line-height:18px;color:#000">java</div><div style="left:283px;top:37px;width:14px;height:15px;box-sizing:border-box;border:1px solid #555;border-radius:3px;background:linear-gradient(#fafafa,#dcdcdc)"><div style="left:2px;top:-1px;font-size:9px;line-height:14px;letter-spacing:0">...</div></div><div style="left:0px;top:54px;width:299px;height:17px;background:#fff"></div><div style="left:0px;top:71px;width:299px;height:1px;background:#d6d6d6"></div><div class="ps" style="left:2px;top:54px;width:140px;height:17px;line-height:18px;letter-spacing:-.2px">All Files</div><div class="ps" style="left:151.5px;top:54px;width:140px;height:17px;line-height:18px;color:#8a8a8a">C:\Users\Geertjan\Docu...</div><div style="left:283px;top:55px;width:14px;height:15px;box-sizing:border-box;border:1px solid #555;border-radius:3px;background:linear-gradient(#fafafa,#dcdcdc)"><div style="left:2px;top:-1px;font-size:9px;line-height:14px;letter-spacing:0">...</div></div><div style="left:0px;top:72px;width:299px;height:17px;background:#fff"></div><div style="left:0px;top:89px;width:299px;height:1px;background:#d6d6d6"></div><div class="ps" style="left:2px;top:72px;width:140px;height:17px;line-height:18px;letter-spacing:-.2px">File Size</div><div class="ps" style="left:151.5px;top:72px;width:140px;height:17px;line-height:18px;color:#8a8a8a">8838</div><div style="left:0px;top:90px;width:299px;height:17px;background:#fff"></div><div style="left:0px;top:107px;width:299px;height:1px;background:#d6d6d6"></div><div class="ps" style="left:2px;top:90px;width:140px;height:17px;line-height:18px;letter-spacing:-.2px">Modification Time</div><div class="ps" style="left:151.5px;top:90px;width:140px;height:17px;line-height:18px;color:#8a8a8a">Feb 13, 2013 9:16:50 AM</div><div style="left:148px;top:18px;width:1px;height:90px;background:#d6d6d6"></div></div><div style="left:299px;top:20px;width:16px;height:111px;background:linear-gradient(90deg,#e9e9e9,#f0f0f0 35%,#f3f3f3)"><div class="arr" style="left:4.5px;top:7px;border-left:3.5px solid transparent;border-right:3.5px solid transparent;border-bottom:4px solid #3c3c3c"></div><div class="arr" style="left:4.5px;top:101px;border-left:3.5px solid transparent;border-right:3.5px solid transparent;border-top:4px solid #3c3c3c"></div><div style="left:1px;top:18px;width:14px;height:40px;box-sizing:border-box;border:1px solid #9a9a9a;border-radius:2px;background:linear-gradient(90deg,#f8f8f8,#ebebeb 45%,#d6d6d6 58%,#cdcdcd)"><div style="left:4px;top:16px;width:7px;height:1px;background:#5a5a5a"></div><div style="left:4px;top:18px;width:7px;height:1px;background:#5a5a5a"></div><div style="left:4px;top:20px;width:7px;height:1px;background:#5a5a5a"></div><div style="left:4px;top:22px;width:7px;height:1px;background:#5a5a5a"></div></div></div><div style="left:0px;top:131px;width:315px;height:1px;background:#a0a0a0"></div><div style="left:2.5px;top:139px;width:200px;height:16px;line-height:16px;font-family:'Liberation Sans',sans-serif;font-weight:bold;font-size:11px;letter-spacing:.25px">AjaxCometServlet.java</div><div style="left:294px;top:138px;width:15px;height:15px;border-radius:8px;background:#9b9b9b"><div style="left:0;top:0;width:15px;text-align:center;line-height:15px;font-family:'Liberation Sans',sans-serif;font-weight:bold;font-size:11px;color:#c9c9c9">?</div></div></div>
<div style="left:24px;top:299px;width:370px;height:265px;box-sizing:border-box;border:1px solid #8b909a;background:#f0f0f0"><div style="left:0px;top:0px;width:368px;height:20px;"><div style="left:0;top:0;width:368px;height:19px;background:linear-gradient(#fff 0,#fff 1px,#eaeaea 1px,#e6e6e6 50%,#d0d0d0 53%,#d4d4d4)"></div><div style="left:0;top:19px;width:368px;height:1px;background:#8b909a"></div><div style="left:0px;top:0;width:127px;height:19px;background:#f3f3f3;box-shadow:inset 1px 1px 0 #fbfbfb"></div><div style="left:127px;top:0;width:1px;height:19px;background:#8b909a"></div><div class="tt" style="left:4px;top:0;height:20px;line-height:21px;letter-spacing:0.2px">destroy - Navigator</div><div style="left:114px;top:6px;width:8px;height:8px"><svg width="8" height="8" viewBox="0 0 8 8" ><path d="M1.5 1.5 L6.5 6.5 M6.5 1.5 L1.5 6.5" stroke="#3c3c3c" stroke-width="2.6" stroke-linecap="round"/><path d="M1.5 1.5 L6.5 6.5 M6.5 1.5 L1.5 6.5" stroke="#f4f4f4" stroke-width=".9" stroke-linecap="round"/></svg></div><div style="left:353px;top:5px;width:10px;height:9px;box-sizing:border-box;border:1px solid #3f434c;background:#f6f6f6"><div style="left:2px;top:4px;width:4px;height:2px;background:#222"></div></div></div><div style="left:1px;top:21px;width:178px;height:21px;box-sizing:border-box;border:1px solid #8e8f8f;border-radius:3px;background:linear-gradient(#f2f2f2,#ebebeb 48%,#dddddd 52%,#cfcfcf);box-shadow:inset 0 0 0 1px rgba(255,255,255,.6)"><div style="left:2px;top:0;height:19px;line-height:20px;font-size:10.7px;color:#000">Members</div><div class="arr" style="left:163px;top:8px;border-left:4px solid transparent;border-right:4px solid transparent;border-top:4px solid #000"></div></div><div style="left:182px;top:21px;width:157px;height:20px;box-sizing:border-box;border:1px solid #c4c4c4;border-radius:3px;background:#f0f0f0"><div style="left:2px;top:0;height:18px;line-height:19px;font-size:10.7px;color:#7c7f95">&lt;empty&gt;</div><div class="arr" style="left:142px;top:8px;border-left:4px solid transparent;border-right:4px solid transparent;border-top:4px solid #b0b0b0"></div></div><div style="left:342px;top:23px;width:16px;height:16px;"><svg width="16" height="16" viewBox="0 0 16 16" ><rect x=".5" y=".5" width="15" height="12" fill="#edf2f8" stroke="#8496ad"/><rect x="1" y="1" width="14" height="2.6" fill="#a3bad5"/><path d="M11.5 2.3 h1 M13.5 2.3 h1" stroke="#fff" stroke-width="1"/><path d="M5.5 7 Q8 5.8 10.5 7.6 Q13 5.8 15.5 7 V14.6 Q13 13.6 10.5 15.4 Q8 13.6 5.5 14.6Z" fill="#f4f9fe" stroke="#5b83a8" stroke-width="1"/><path d="M10.5 7.6 V15.2" stroke="#5b83a8" stroke-width="1"/><path d="M6.5 8 Q8.5 7.3 10 8.6 V14.2 Q8.5 13.2 6.5 13.8Z" fill="#dbe8f5"/></svg></div><div style="left:0px;top:43px;width:352px;height:187px;background:#fff"><div style="left:4px;top:5px;width:3px;height:9px;box-sizing:border-box;border:1px solid #b0b0b0;border-right:none"></div></div><div style="left:352px;top:43px;width:16px;height:187px;background:linear-gradient(90deg,#e9e9e9,#f0f0f0 35%,#f3f3f3)"><div class="arr" style="left:4.5px;top:7px;border-left:3.5px solid transparent;border-right:3.5px solid transparent;border-bottom:4px solid #3c3c3c"></div><div class="arr" style="left:4.5px;top:177px;border-left:3.5px solid transparent;border-right:3.5px solid transparent;border-top:4px solid #3c3c3c"></div><div style="left:1px;top:18px;width:14px;height:102px;box-sizing:border-box;border:1px solid #9a9a9a;border-radius:2px;background:linear-gradient(90deg,#f8f8f8,#ebebeb 45%,#d6d6d6 58%,#cdcdcd)"><div style="left:4px;top:47px;width:7px;height:1px;background:#5a5a5a"></div><div style="left:4px;top:49px;width:7px;height:1px;background:#5a5a5a"></div><div style="left:4px;top:51px;width:7px;height:1px;background:#5a5a5a"></div><div style="left:4px;top:53px;width:7px;height:1px;background:#5a5a5a"></div></div></div><div style="left:0px;top:230px;width:368px;height:1px;background:#a0a0a0"></div><div style="left:180px;top:232px;width:0px;height:0px;border-left:4px solid transparent;border-right:4px solid transparent;border-top:4px solid #9a9a9a"></div><div style="left:10px;top:240px;width:17px;height:16px;"><svg width="17" height="16" viewBox="0 0 17 16" ><rect x="3" y=".5" width="4" height="4.5" rx="1.2" fill="#ecc977" stroke="#b58a2a" stroke-width=".8"/><path d="M.5 10 V6.8 Q.5 5.3 2 5.3 H8 Q9.5 5.3 9.5 6.8 V10 H8 V8 H2 V10Z" fill="#ea978e" stroke="#c05a52" stroke-width=".8"/><rect x="2.3" y="8" width="5.4" height="2.6" fill="#ea978e"/><path d="M2.4 10.5 H7.6 V15.3 H5.6 V12 H4.4 V15.3 H2.4Z" fill="#b2d5f3" stroke="#5b8fc4" stroke-width=".8"/><rect x="8.8" y="3.3" width="4" height="4.3" rx="1.2" fill="#ecc977" stroke="#b58a2a" stroke-width=".8"/><path d="M6.5 11.6 V9.4 Q6.5 7.9 8 7.9 H14 Q15.5 7.9 15.5 9.4 V11.6 H14 V10.4 H8 V11.6Z" fill="#ea978e" stroke="#c05a52" stroke-width=".8"/><rect x="8.3" y="9.6" width="5.4" height="2.4" fill="#ea978e"/><path d="M8.4 12 H13.6 V15.3 H11.6 V13.3 H10.4 V15.3 H8.4Z" fill="#b2d5f3" stroke="#5b8fc4" stroke-width=".8"/></svg></div><div style="left:35px;top:239px;width:27px;height:18px;box-sizing:border-box;border:1px solid #707070;border-radius:4px;background:linear-gradient(#dadada,#ececec);box-shadow:inset 0 1px 2px rgba(0,0,0,.25)"><svg width="12" height="12" viewBox="0 0 12 12" style="left:7px;top:3px"><rect x=".5" y=".5" width="10" height="10" fill="#a9d0f3" stroke="#4a7db3"/></svg></div><div style="left:65px;top:239px;width:27px;height:18px;box-sizing:border-box;border:1px solid #707070;border-radius:4px;background:linear-gradient(#dadada,#ececec);box-shadow:inset 0 1px 2px rgba(0,0,0,.25)"><svg width="4" height="13" viewBox="0 0 4 13" style="left:12px;top:2px"><rect x=".5" y=".5" width="2" height="11" fill="#a9d0f3" stroke="#4a7db3"/></svg></div><div style="left:95px;top:239px;width:27px;height:18px;box-sizing:border-box;border:1px solid #707070;border-radius:4px;background:linear-gradient(#dadada,#ececec);box-shadow:inset 0 1px 2px rgba(0,0,0,.25)"><svg width="16" height="15" viewBox="0 0 16 15" style="left:5px;top:0px"><path d="M4.5 6.5 V4.5 Q4.5 1.2 8 1.2 Q11.5 1.2 11.5 4.5 V6.5" fill="none" stroke="#8d8d8d" stroke-width="2"/><path d="M4.5 6.5 V4.5 Q4.5 1.2 8 1.2 Q11.5 1.2 11.5 4.5 V6.5" fill="none" stroke="#e3e3e3" stroke-width=".7"/><rect x="1.5" y="6" width="13" height="8" fill="#e3b451" stroke="#8a6416"/><path d="M2 7.5 h12 M2 9.5 h12 M2 11.5 h12" stroke="#f6dc96" stroke-width="1"/></svg></div><div style="left:125px;top:239px;width:27px;height:18px;box-sizing:border-box;border:1px solid #707070;border-radius:4px;background:linear-gradient(#dadada,#ececec);box-shadow:inset 0 1px 2px rgba(0,0,0,.25)"><svg width="16" height="16" viewBox="0 0 16 16" style="left:5px;top:0"><rect x="1" y="6.5" width="7.5" height="8" fill="#9cc7ee" stroke="#4b7fb8"/><path d="M8.7 .4 L14.2 5.3 L9 10.4 L3.4 5.3Z" fill="#f3d38a" stroke="#a67c2d"/><circle cx="12.5" cy="10.6" r="3.6" fill="#f4a3a3" stroke="#c26464"/><circle cx="11.8" cy="9.8" r="1.5" fill="#fbd0d0"/></svg></div><div style="left:154px;top:241px;width:1px;height:16px;background:#8c8c8c"></div><div style="left:155px;top:241px;width:1px;height:16px;background:#fff"></div><div style="left:164px;top:240px;width:16px;height:16px;"><svg width="16" height="16" viewBox="0 0 16 16" ><rect x=".5" y="3.5" width="10" height="11" fill="#f3d48a" stroke="#a9761a"/><path d="M.5 9 H10.5 M5.5 3.5 V14.5" stroke="#a9761a"/><rect x="4.5" y="7.5" width="5" height="5" fill="#8fc0ec" stroke="#3f73aa" stroke-width=".9"/><path d="M9 1 L12.5 4.5 L9 8 L5.5 4.5Z" fill="#f5cf6a" stroke="#a9761a" stroke-width=".9"/><circle cx="12" cy="9" r="2.8" fill="#f59a9a" stroke="#b74a4a" stroke-width=".9"/></svg></div><div style="left:187px;top:241px;width:1px;height:16px;background:#8c8c8c"></div><div style="left:188px;top:241px;width:1px;height:16px;background:#fff"></div><div style="left:191px;top:239px;width:27px;height:18px;box-sizing:border-box;border:1px solid #707070;border-radius:4px;background:linear-gradient(#dadada,#ececec);box-shadow:inset 0 1px 2px rgba(0,0,0,.25)"><svg width="19" height="16" viewBox="0 0 19 16" style="left:4px;top:0px"><svg width="19" height="16" viewBox="0 0 19 16" ><path d="M3.5 1.5 h2 v6.5 h2.6 l-3.6 4.6 l-3.6 -4.6 h2.6z" fill="#e8f1fb" stroke="#3b6ea5" stroke-width="1" stroke-linejoin="round"/><path d="M10.5 7.5 V3 Q10.5 1.5 12 1.5 H13.5 Q15 1.5 15 3 V7.5 M10.5 5 H15" fill="none" stroke="#47688e" stroke-width="1.7"/><path d="M10.5 7.5 V3 Q10.5 1.5 12 1.5 H13.5 Q15 1.5 15 3 V7.5 M10.5 5 H15" fill="none" stroke="#e9f0f8" stroke-width=".5"/><path d="M10.3 9.8 H15.2 L10.3 14.2 H15.2" fill="none" stroke="#a8640c" stroke-width="1.9" stroke-linejoin="round"/><path d="M10.3 9.8 H15.2 L10.3 14.2 H15.2" fill="none" stroke="#f8e3b8" stroke-width=".6"/></svg></svg></div><div style="left:226px;top:240px;width:19px;height:16px;"><svg width="19" height="16" viewBox="0 0 19 16" ><path d="M3.5 1.5 h2 v6.5 h2.6 l-3.6 4.6 l-3.6 -4.6 h2.6z" fill="#e8f1fb" stroke="#3b6ea5" stroke-width="1" stroke-linejoin="round"/><path d="M10 1.5 h7 M10 3.5 h5 M10 5.5 h7 M10 7.5 h5 M10 9.5 h7 M10 11.5 h5 M10 13.5 h7" stroke="#555" stroke-width="1"/></svg></div></div>
<div style="left:398px;top:401px;width:692px;height:163px;box-sizing:border-box;border:1px solid #8b909a;background:#f0f0f0"><div style="left:0px;top:0px;width:690px;height:20px;"><div style="left:0;top:0;width:690px;height:19px;background:linear-gradient(#fff 0,#fff 1px,#eaeaea 1px,#e6e6e6 50%,#d0d0d0 53%,#d4d4d4)"></div><div style="left:0;top:19px;width:690px;height:1px;background:#8b909a"></div><div style="left:0px;top:0;width:67px;height:19px;background:#f3f3f3;box-shadow:inset 1px 1px 0 #fbfbfb"></div><div style="left:67px;top:0;width:1px;height:19px;background:#8b909a"></div><div class="tt" style="left:4px;top:0;height:20px;line-height:21px;letter-spacing:0px">Javadoc</div><div style="left:54px;top:6px;width:8px;height:8px"><svg width="8" height="8" viewBox="0 0 8 8" ><path d="M1.5 1.5 L6.5 6.5 M6.5 1.5 L1.5 6.5" stroke="#3c3c3c" stroke-width="2.6" stroke-linecap="round"/><path d="M1.5 1.5 L6.5 6.5 M6.5 1.5 L1.5 6.5" stroke="#f4f4f4" stroke-width=".9" stroke-linecap="round"/></svg></div><div style="left:675px;top:5px;width:10px;height:9px;box-sizing:border-box;border:1px solid #3f434c;background:#f6f6f6"><div style="left:2px;top:4px;width:4px;height:2px;background:#222"></div></div></div><div style="left:2px;top:22px;width:17px;height:16px;"><svg width="17" height="16" viewBox="0 0 17 16" ><path d="M.5 8 L8 .8 V5.5 H16 V10.5 H8 V15.2Z" fill="#9c9c9c" stroke="#8a8a8a" stroke-width=".6"/></svg></div><div style="left:23px;top:22px;width:17px;height:16px;"><svg width="17" height="16" viewBox="0 0 17 16" ><path d="M16.5 8 L9 .8 V5.5 H1 V10.5 H9 V15.2Z" fill="#9c9c9c" stroke="#8a8a8a" stroke-width=".6"/></svg></div><div style="left:44px;top:22px;width:16px;height:16px;"><svg width="16" height="16" viewBox="0 0 16 16" ><rect x="1.5" y=".5" width="14" height="11" fill="#f4f8fc" stroke="#7b8ea6"/><rect x="2" y="1" width="13" height="2.5" fill="#a9bdd6"/><circle cx="4.5" cy="11" r="4" fill="#5d9ad8" stroke="#5b6f8a" stroke-width=".9"/><path d="M2.5 9.5 Q4.5 8 6.5 9.5 L5 12.5z" fill="#4fb23a"/></svg></div><div style="left:65px;top:22px;width:16px;height:16px;"><svg width="16" height="16" viewBox="0 0 16 16" ><rect x=".5" y="2.5" width="11" height="12" fill="#e8eef6" stroke="#7b8ea6"/><rect x="4.5" y=".5" width="11" height="9" fill="#f4f8fc" stroke="#7b8ea6"/><rect x="5" y="1" width="10" height="2" fill="#a9bdd6"/><path d="M6.5 5 h3 M11 5 h3" stroke="#9db5d3"/><path d="M2 13 L7 8 M4 7.5 H7.5 V11" stroke="#b06c12" stroke-width="2.2" fill="none"/><path d="M2 13 L7 8 M4.5 7.8 H7.2 V10.5" stroke="#f3bb55" stroke-width="1" fill="none"/></svg></div><div style="left:0px;top:41px;width:674px;height:1px;background:#7f7f7f"></div><div style="left:0px;top:42px;width:674px;height:119px;background:#f7f7ff"></div><div style="left:674px;top:42px;width:16px;height:119px;background:linear-gradient(90deg,#e9e9e9,#f0f0f0 35%,#f3f3f3)"><div class="arr" style="left:4.5px;top:7px;border-left:3.5px solid transparent;border-right:3.5px solid transparent;border-bottom:4px solid #3c3c3c"></div><div class="arr" style="left:4.5px;top:109px;border-left:3.5px solid transparent;border-right:3.5px solid transparent;border-top:4px solid #3c3c3c"></div><div style="left:1px;top:18px;width:14px;height:48px;box-sizing:border-box;border:1px solid #9a9a9a;border-radius:2px;background:linear-gradient(90deg,#f8f8f8,#ebebeb 45%,#d6d6d6 58%,#cdcdcd)"><div style="left:4px;top:20px;width:7px;height:1px;background:#5a5a5a"></div><div style="left:4px;top:22px;width:7px;height:1px;background:#5a5a5a"></div><div style="left:4px;top:24px;width:7px;height:1px;background:#5a5a5a"></div><div style="left:4px;top:26px;width:7px;height:1px;background:#5a5a5a"></div></div></div></div>
<div style="left:25px;top:571px;width:12px;height:10px;"><svg width="12" height="10" viewBox="0 0 12 10" ><rect x="3.5" y=".5" width="8" height="6" fill="#fff" stroke="#222"/><rect x="3.5" y=".5" width="8" height="1.6" fill="#222"/><rect x=".5" y="3.5" width="8" height="6" fill="#fff" stroke="#222"/><rect x=".5" y="3.5" width="8" height="1.6" fill="#222"/></svg></div>
<div style="left:45px;top:568px;width:17px;height:17px;"><svg width="17" height="17" viewBox="0 0 17 17" ><rect x=".5" y=".5" width="15" height="12" fill="#f4f8fc" stroke="#7b8ea6"/><rect x="1" y="1" width="14" height="2.6" fill="#a9bdd6"/><path d="M7.5 9.5 V14.5 Q7.5 16.2 10.2 16.2 Q13 16.2 13 14.5 V9.5Z" fill="url(#gCyl)" stroke="#0a5bd0"/><ellipse cx="10.2" cy="9.5" rx="2.7" ry="1.3" fill="#5aa0f5" stroke="#0a5bd0"/></svg></div>
<div style="left:64.5px;top:569px;width:120px;height:16px;line-height:16px;font-size:10.7px">Versioning Output</div>
<div style="left:0px;top:587px;width:1090px;height:1px;background:#dcdcdc"></div>
<div style="left:0px;top:588px;width:1090px;height:1px;background:#a0a0a0"></div>
</body></html>
